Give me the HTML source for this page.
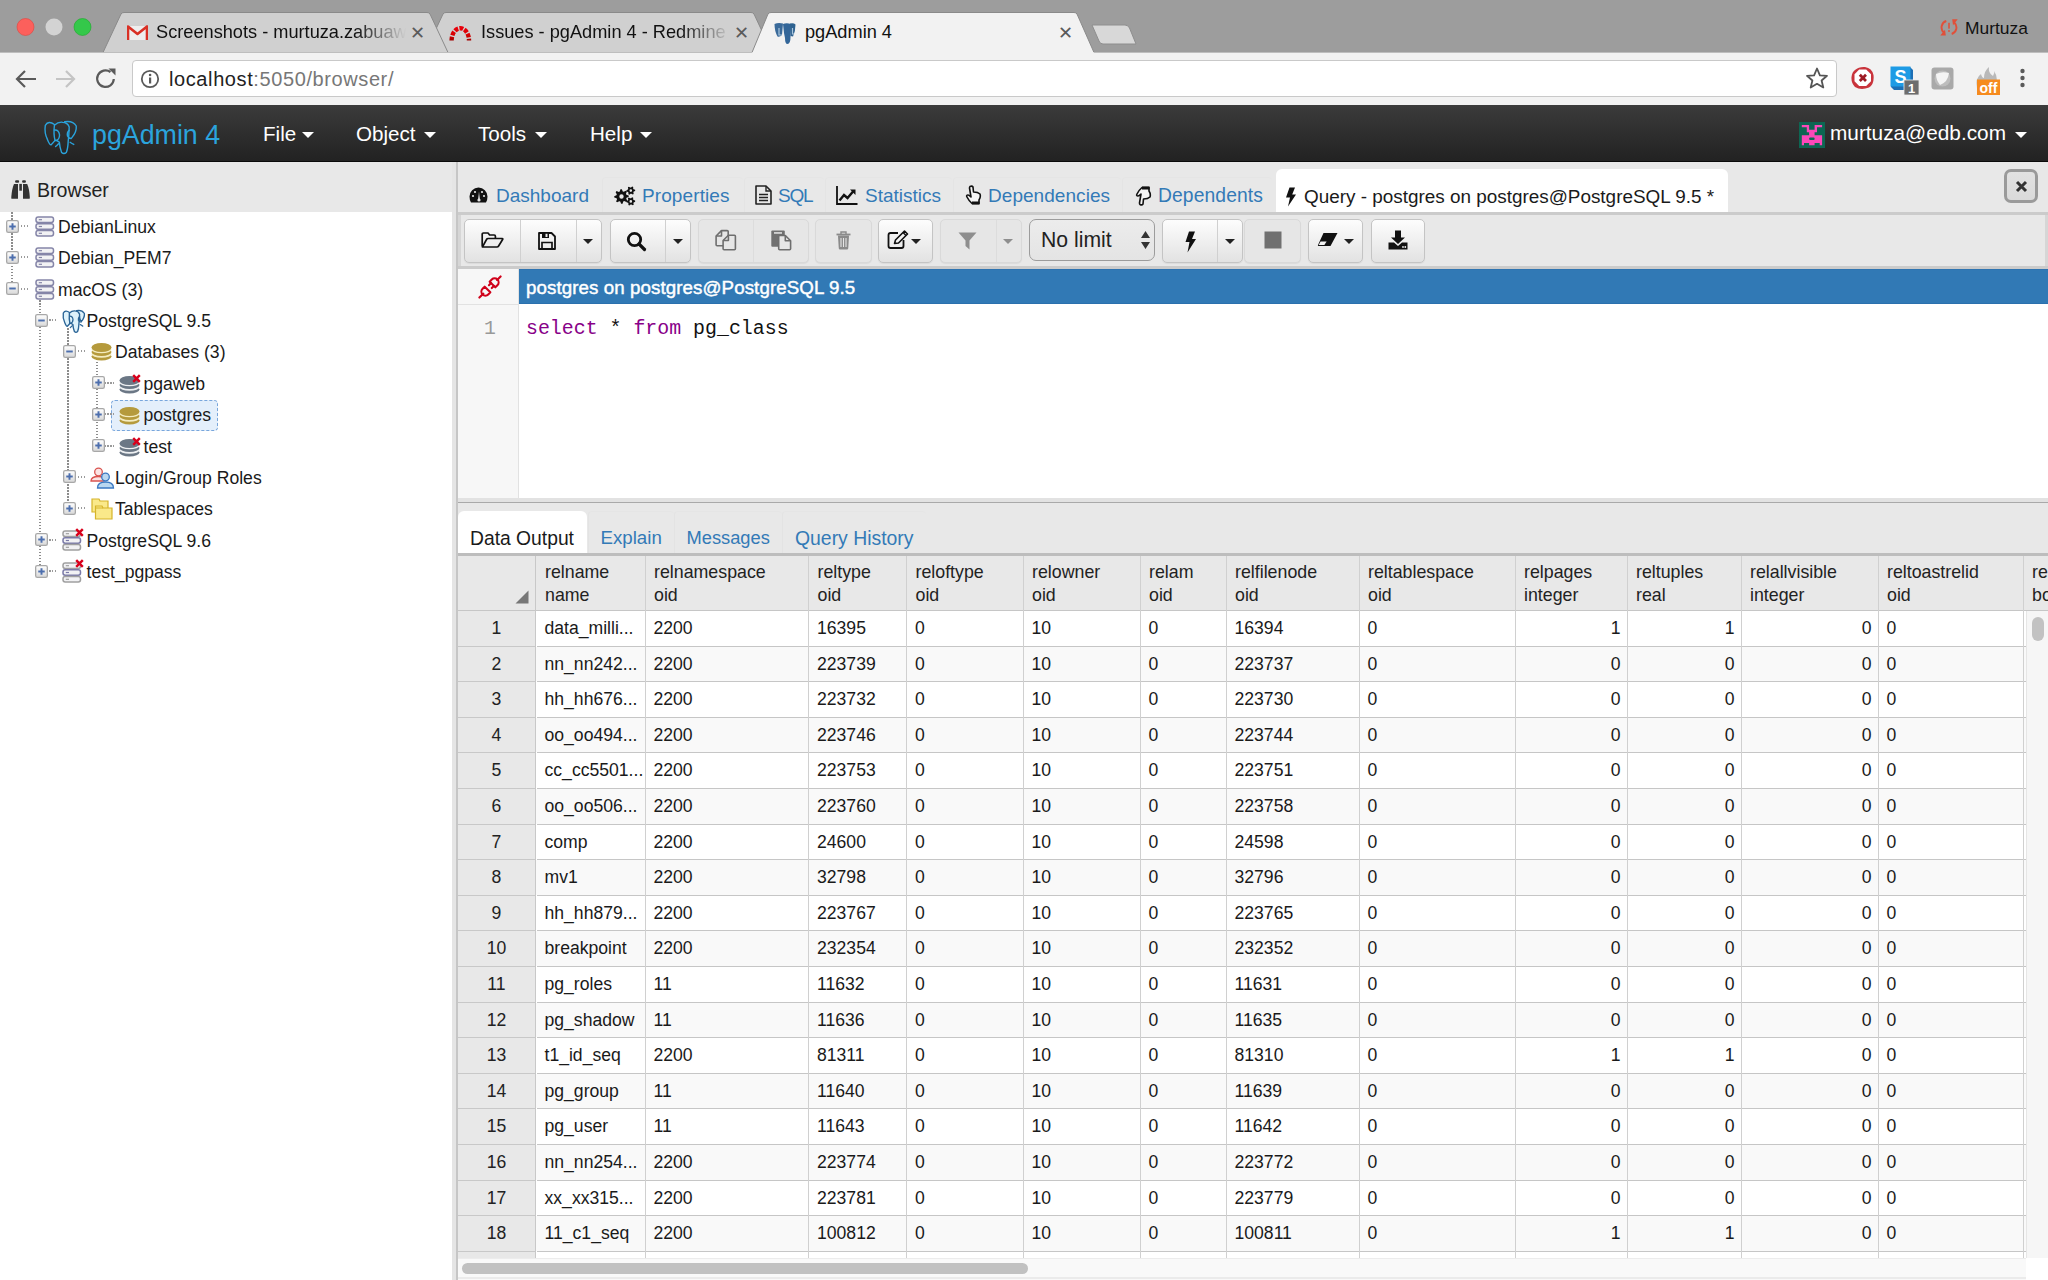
<!DOCTYPE html>
<html><head><meta charset="utf-8">
<style>
*{box-sizing:border-box;margin:0;padding:0}
html,body{width:2048px;height:1280px;overflow:hidden;background:#fff;font-family:"Liberation Sans",sans-serif;color:#222}
.a{position:absolute}
.nw{white-space:nowrap}
#titlebar{left:0;top:0;width:2048px;height:52px;background:#9d9d9d}
#toolbar{left:0;top:53px;width:2048px;height:52px;background:#f2f2f2}
#url{left:132px;top:60px;width:1705px;height:37px;background:#fff;border:1px solid #c9c9c9;border-radius:4px}
.tabt{font-size:18.2px;color:#111;top:21px;line-height:22px}
#nav{left:0;top:105px;width:2048px;height:57px;background:linear-gradient(#3b3b3b,#222);border-bottom:1px solid #0a0a0a}
.menu{font-size:20.6px;color:#fff;top:121.5px;line-height:24px}
.tab{font-size:19px;line-height:24px;color:#337ab7;top:183.5px}
.caret{width:0;height:0;border-left:6px solid transparent;border-right:6px solid transparent;border-top:6px solid #fff}
</style></head><body>
<div id="titlebar" class="a"></div>
<svg class="a" style="left:0;top:0" width="2048" height="53">
  <circle cx="25.5" cy="27" r="8.5" fill="#fc605c" stroke="#e0443e" stroke-width="0.6"/>
  <circle cx="54" cy="27" r="8.5" fill="#d3d3d3"/>
  <circle cx="82.5" cy="27" r="8.5" fill="#34c84a" stroke="#1aab29" stroke-width="0.6"/>
  <path d="M425 52.5 L443 14 Q444 12.5 446 12.5 L751 12.5 Q753 12.5 754 14 L772 52.5 Z" fill="#d0d0d0" stroke="#8a8a8a" stroke-width="1"/>
  <path d="M103 52.5 L121 14 Q122 12.5 124 12.5 L427 12.5 Q429 12.5 430 14 L448 52.5 Z" fill="#d0d0d0" stroke="#8a8a8a" stroke-width="1"/>
  <path d="M0 52.5 L752 52.5 L768 14 Q769 12.5 771 12.5 L1074 12.5 Q1076 12.5 1077 14 L1094 52.5 L2048 52.5 L2048 54 L0 54 Z" fill="#f2f2f2" stroke="#8a8a8a" stroke-width="1"/>
  <rect x="0" y="52.5" width="2048" height="2" fill="#f2f2f2"/>
  <path d="M1092 25 L1125 25 Q1128 25 1129.5 28 L1136 44 L1103 44 Q1100 44 1099 41 Z" fill="#d8d8d8" stroke="#8e8e8e" stroke-width="1"/>
</svg>
<div id="toolbar" class="a"></div>
<!-- tab contents -->
<svg class="a" style="left:127px;top:25px" width="21" height="16" viewBox="0 0 21 16">
  <rect x="1" y="1" width="19" height="14" fill="#eee"/>
  <path d="M1 15 V1.5 L10.5 9 L20 1.5 V15" fill="none" stroke="#d93025" stroke-width="2.6" stroke-linejoin="round"/>
</svg>
<div class="a tabt nw" style="left:156px;width:250px;overflow:hidden;-webkit-mask-image:linear-gradient(90deg,#000 80%,transparent 100%)">Screenshots - murtuza.zabuawala@gmail.com</div>
<div class="a" style="left:409.5px;top:21px;font-size:17.5px;color:#5a5a5a;line-height:24px">&#x2715;</div>
<svg class="a" style="left:449px;top:22.5px" width="24" height="18" viewBox="0 0 24 18">
  <defs><linearGradient id="rmg" x1="0" y1="0" x2="0" y2="1"><stop offset="0" stop-color="#e8000b"/><stop offset="0.6" stop-color="#d40000"/><stop offset="1" stop-color="#a30000"/></linearGradient></defs><path d="M2.6 17.5 A8.7 12.3 0 0 1 20 17.5" fill="none" stroke="url(#rmg)" stroke-width="4.4" stroke-dasharray="3.9 1.3"/>
</svg>
<div class="a tabt nw" style="left:481px;width:250px;overflow:hidden;-webkit-mask-image:linear-gradient(90deg,#000 80%,transparent 100%)">Issues - pgAdmin 4 - Redmine</div>
<div class="a" style="left:734px;top:21px;font-size:17.5px;color:#5a5a5a;line-height:24px">&#x2715;</div>
<svg class="a" style="left:774px;top:22px" width="22" height="23" viewBox="0 0 22 23">
  <path d="M0.5 2 Q4 0.5 9 1.5 L8 13 Q5.5 15.5 3.5 14.5 Q0.5 9 0.5 2Z" fill="#3a6a9a"/>
  <path d="M9 2 Q12.5 0.5 17 2 L16.5 15 Q16.5 22 13.5 22 Q11 22 11 16 L10 11Z" fill="#336699"/>
  <path d="M16 1.5 Q19.5 0.5 21.5 2.5 Q21.5 9 19 14.5 L16.5 14Z" fill="#2f6290"/>
  <path d="M5 6 V13 L8 13 M18.5 6 V12 L20 12" fill="none" stroke="#a9c5dd" stroke-width="1.2"/>
</svg>
<div class="a tabt nw" style="left:805px">pgAdmin 4</div>
<div class="a" style="left:1058px;top:21px;font-size:17.5px;color:#5a5a5a;line-height:24px">&#x2715;</div>
<!-- profile -->
<svg class="a" style="left:1940px;top:19px" width="18" height="17" viewBox="0 0 18 17">
  <g fill="none" stroke="#e0503a" stroke-width="1.9">
  <path d="M6.3 2 A6.8 6.8 0 0 0 3.8 13.5"/>
  <path d="M11.7 15 A6.8 6.8 0 0 0 14.2 3.5"/>
  </g>
  <path d="M0.3 16.6 L5.8 16.6 L5 10.8Z M17.7 0.3 L12.2 0.3 L13 6.2Z" fill="#e0503a"/>
  <rect x="8.2" y="3.8" width="1.6" height="5.8" fill="#e0503a"/><circle cx="9" cy="12" r="0.95" fill="#e0503a"/>
</svg>
<div class="a nw" style="left:1965px;top:16px;font-size:17.4px;color:#111;line-height:24px">Murtuza</div>

<!-- toolbar -->
<svg class="a" style="left:14px;top:66px" width="120" height="26" viewBox="0 0 120 26">
  <path d="M22 13 H4 M11 5 L3 13 L11 21" fill="none" stroke="#5a5a5a" stroke-width="2.2"/>
  <path d="M42 13 H60 M52 5 L60 13 L52 21" fill="none" stroke="#c4c4c4" stroke-width="2.2"/>
  <path d="M96.5 6 A8.3 8.3 0 1 0 99.8 13" fill="none" stroke="#5a5a5a" stroke-width="2.2"/>
  <path d="M94.5 2.5 L101.5 2.5 L101.5 9.5 Z" fill="#5a5a5a"/>
</svg>
<div id="url" class="a"></div>
<svg class="a" style="left:140px;top:69px" width="20" height="20" viewBox="0 0 20 20">
  <circle cx="10" cy="10" r="8.2" fill="none" stroke="#5a5a5a" stroke-width="1.8"/>
  <rect x="9" y="8.5" width="2.2" height="6" fill="#5a5a5a"/><circle cx="10.1" cy="6" r="1.3" fill="#5a5a5a"/>
</svg>
<div class="a nw" style="left:169px;top:66px;font-size:20px;line-height:26px;letter-spacing:0.6px;color:#222">localhost<span style="color:#777">:5050/browser/</span></div>
<svg class="a" style="left:1805px;top:67px" width="24" height="22" viewBox="0 0 24 22">
  <path d="M12 1.5 L14.9 8.3 L22 8.8 L16.6 13.5 L18.3 20.5 L12 16.8 L5.7 20.5 L7.4 13.5 L2 8.8 L9.1 8.3 Z" fill="none" stroke="#555" stroke-width="1.8" stroke-linejoin="round"/>
</svg>
<!-- extensions -->
<svg class="a" style="left:1851px;top:66px" width="24" height="24" viewBox="0 0 24 24">
  <path d="M4 4 Q8 0.5 14 1 Q21 2 22.5 9 Q23.5 18 18 21.5 Q10 24.5 4 21 Q0 17 0.5 11 Q1 6 4 4Z" fill="#c9343c"/>
  <path d="M8.2 3.5 H15.2 L20 8.3 V15.2 L15.2 20 H8.2 L3.5 15.2 V8.3Z" fill="#fff"/>
  <path d="M8.8 8.8 L15 15 M15 8.8 L8.8 15" stroke="#9e1a24" stroke-width="2.8"/>
</svg>
<svg class="a" style="left:1890px;top:66px" width="32" height="30" viewBox="0 0 32 30">
  <path d="M1 1 H20 L23 4 V22 L20 24 H4 L1 21Z" fill="#1d6fb5"/>
  <rect x="0.5" y="0.5" width="20" height="20" fill="#1e9be5"/>
  <text x="10.5" y="17" font-family="Liberation Sans" font-weight="700" font-size="18" fill="#fff" text-anchor="middle">S</text>
  <rect x="14" y="14" width="15" height="15" fill="#6d6d6d" stroke="#eee" stroke-width="0.8"/>
  <text x="21.5" y="27" font-family="Liberation Sans" font-weight="700" font-size="13" fill="#fff" text-anchor="middle">1</text>
</svg>
<svg class="a" style="left:1931px;top:67px" width="23" height="23" viewBox="0 0 23 23">
  <rect x="0.5" y="0.5" width="22" height="22" rx="3" fill="#a9a9a9"/>
  <circle cx="11.5" cy="11.5" r="8" fill="#bdbdbd"/>
  <path d="M5 7 Q11 4 18 6 Q17 15 9 18 Q5 13 5 7Z" fill="#f4f4f4"/>
</svg>
<svg class="a" style="left:1974px;top:66px" width="27" height="30" viewBox="0 0 27 30">
  <path d="M3 22 Q1 12 7 8 Q8 12 10 12 Q10 5 15 1 Q14 7 19 10 Q21 7 20 5 Q25 12 21 22Z" fill="#b9b9b9"/>
  <rect x="3" y="13.5" width="23" height="15.5" fill="#f68b1e"/>
  <text x="14.5" y="26.5" font-family="Liberation Sans" font-weight="700" font-size="14" fill="#fff" text-anchor="middle">off</text>
</svg>
<svg class="a" style="left:2018px;top:67px" width="10" height="24" viewBox="0 0 10 24">
  <circle cx="4.5" cy="4" r="2.2" fill="#5a5a5a"/><circle cx="4.5" cy="11" r="2.2" fill="#5a5a5a"/><circle cx="4.5" cy="18" r="2.2" fill="#5a5a5a"/>
</svg>

<!-- navbar -->
<div id="nav" class="a"></div>
<svg class="a" style="left:39px;top:115px" width="44" height="44" viewBox="0 0 30 30">
<g fill="none" stroke="#2aa3dc" stroke-width="0.95" stroke-linejoin="round" stroke-linecap="round">
<path d="M10.5 6.5 Q6.5 3.5 4.3 7 Q3.5 12 5.8 16.8 Q7.3 20.5 8.3 20.3 Q9.6 19 10.8 17.5"/>
<path d="M17.5 4.6 Q23 3.6 25.4 7.5 Q25.8 11.5 22.3 15.6"/>
<path d="M10.5 7 Q13 4.6 16 4.9 Q19.6 5.1 20.6 8.2 Q20.4 14 19.9 18 Q19.7 23 18.6 25.6 Q17 27 15.4 25.6 Q14.1 22 13.9 18.6 Q12.5 17.2 10.9 17.2 Q9.8 13 10.5 7"/>
<path d="M10.6 10.2 Q13.6 10 14 13.6 Q14 17 11.2 17.4"/>
<path d="M20.6 10.4 Q18.9 12 19.4 14.2 Q20.3 16 22 16"/>
<path d="M11.3 21.5 Q12.4 20.6 13.3 19.6 M21.2 18.6 Q22.5 19.5 23.7 20.1"/>
</g>
</svg>
<div class="a nw" style="left:92px;top:117px;font-size:26.8px;color:#2ba4dd;line-height:36px">pgAdmin 4</div>
<div class="a menu nw" style="left:263px">File</div><div class="a caret" style="left:302px;top:132px"></div>
<div class="a menu nw" style="left:356px">Object</div><div class="a caret" style="left:424px;top:132px"></div>
<div class="a menu nw" style="left:478px">Tools</div><div class="a caret" style="left:535px;top:132px"></div>
<div class="a menu nw" style="left:590px">Help</div><div class="a caret" style="left:640px;top:132px"></div>
<svg class="a" style="left:1799px;top:122px" width="26" height="26" viewBox="0 0 26 26">
  <rect width="26" height="26" fill="#0d6652"/>
  <path d="M2.8 2.9 H10.1 V7.7 H15.6 V2.9 H23.1 V5.3 H18 V10.3 H15.6 V13.3 H23.1 V23.3 H20.7 V21 H15.6 V23.3 H10.1 V21 H5 V23.3 H2.8 V13.3 H10.1 V10.3 H7.8 V5.3 H2.8 Z" fill="#fb48b9"/>
  <rect x="10.1" y="15.6" width="5.5" height="2.4" rx="1" fill="#0d6652"/>
</svg>
<div class="a nw" style="left:1830px;top:120px;font-size:20.8px;color:#fff;line-height:26px">murtuza@edb.com</div>
<div class="a caret" style="left:2015px;top:132px"></div>
<!-- ============ LEFT PANEL ============ -->
<div class="a" style="left:0;top:162px;width:452px;height:1118px;background:#fff"></div>
<div class="a" style="left:0;top:162px;width:452px;height:50px;background:#e8e8e8"></div>
<svg class="a" style="left:11px;top:180px" width="20" height="20" viewBox="0 0 20 20">
  <g fill="#333">
  <rect x="4.1" y="0.3" width="4" height="2.4" rx="1"/><rect x="11.1" y="0.3" width="3.8" height="2.4" rx="1"/>
  <path d="M3 3.9 H7 V18.7 H0.5 Q0.2 18.7 0.3 17 Q0.8 9 3 3.9Z"/>
  <rect x="8.3" y="3.9" width="2.6" height="6.8"/>
  <path d="M12 3.9 H16.2 Q18.4 9 18.8 17 Q18.9 18.7 18.5 18.7 H12Z"/>
  </g>
</svg>
<div class="a nw" style="left:37px;top:178px;font-size:19.6px;line-height:24px;color:#222">Browser</div>
<div class="a" style="left:452px;top:162px;width:6px;height:1118px;background:#e5e5e5;border-right:2px solid #c6c6c6"></div>
<div class="a" style="left:111px;top:400px;width:107px;height:31px;background:#e4effb;border:1.5px dashed #78a6dc;border-radius:4px"></div>
<div class="a" style="left:11px;top:212px;width:1.5px;height:77px;background:repeating-linear-gradient(180deg,#8c8c8c 0 1.5px,transparent 1.5px 3px)"></div>
<div class="a" style="left:39px;top:297px;width:1.5px;height:274px;background:repeating-linear-gradient(180deg,#8c8c8c 0 1.5px,transparent 1.5px 3px)"></div>
<div class="a" style="left:67px;top:328px;width:1.5px;height:180px;background:repeating-linear-gradient(180deg,#8c8c8c 0 1.5px,transparent 1.5px 3px)"></div>
<div class="a" style="left:96px;top:359px;width:1.5px;height:87px;background:repeating-linear-gradient(180deg,#8c8c8c 0 1.5px,transparent 1.5px 3px)"></div>
<div class="a" style="left:18px;top:225px;width:10px;height:1.5px;background:repeating-linear-gradient(90deg,#9a9a9a 0 1.5px,transparent 1.5px 3px)"></div>
<svg class="a" style="left:6.0px;top:219.5px" width="13" height="13" viewBox="0 0 12 12"><defs><linearGradient id="eg" x1="0" y1="0" x2="0" y2="1"><stop offset="0" stop-color="#fff"/><stop offset="1" stop-color="#d8d8d8"/></linearGradient></defs><rect x="0.6" y="0.6" width="10.8" height="10.8" rx="1.5" fill="url(#eg)" stroke="#a8a8a8" stroke-width="1.2"/><path d="M3 6 H9" stroke="#4d6fae" stroke-width="1.8"/><path d="M6 3 V9" stroke="#4d6fae" stroke-width="1.8"/></svg>
<svg class="a" style="left:35.0px;top:216.0px" width="20" height="21" viewBox="0 0 20 21"><rect x="1" y="1" width="17.5" height="5.4" rx="2.2" fill="#f2f2f4" stroke="#8585a8" stroke-width="1.5"/><path d="M3.8 3.7 H7" stroke="#8585a8" stroke-width="1.2"/><rect x="1" y="7.8" width="17.5" height="5.4" rx="2.2" fill="#f2f2f4" stroke="#8585a8" stroke-width="1.5"/><path d="M3.8 10.5 H7" stroke="#8585a8" stroke-width="1.2"/><rect x="1" y="14.6" width="17.5" height="5.4" rx="2.2" fill="#f2f2f4" stroke="#8585a8" stroke-width="1.5"/><path d="M3.8 17.3 H7" stroke="#8585a8" stroke-width="1.2"/></svg>
<div class="a nw" style="left:58.0px;top:215.0px;font-size:17.6px;line-height:24px;color:#1a1a1a">DebianLinux</div>
<div class="a" style="left:18px;top:256px;width:10px;height:1.5px;background:repeating-linear-gradient(90deg,#9a9a9a 0 1.5px,transparent 1.5px 3px)"></div>
<svg class="a" style="left:6.0px;top:250.9px" width="13" height="13" viewBox="0 0 12 12"><defs><linearGradient id="eg" x1="0" y1="0" x2="0" y2="1"><stop offset="0" stop-color="#fff"/><stop offset="1" stop-color="#d8d8d8"/></linearGradient></defs><rect x="0.6" y="0.6" width="10.8" height="10.8" rx="1.5" fill="url(#eg)" stroke="#a8a8a8" stroke-width="1.2"/><path d="M3 6 H9" stroke="#4d6fae" stroke-width="1.8"/><path d="M6 3 V9" stroke="#4d6fae" stroke-width="1.8"/></svg>
<svg class="a" style="left:35.0px;top:247.4px" width="20" height="21" viewBox="0 0 20 21"><rect x="1" y="1" width="17.5" height="5.4" rx="2.2" fill="#f2f2f4" stroke="#8585a8" stroke-width="1.5"/><path d="M3.8 3.7 H7" stroke="#8585a8" stroke-width="1.2"/><rect x="1" y="7.8" width="17.5" height="5.4" rx="2.2" fill="#f2f2f4" stroke="#8585a8" stroke-width="1.5"/><path d="M3.8 10.5 H7" stroke="#8585a8" stroke-width="1.2"/><rect x="1" y="14.6" width="17.5" height="5.4" rx="2.2" fill="#f2f2f4" stroke="#8585a8" stroke-width="1.5"/><path d="M3.8 17.3 H7" stroke="#8585a8" stroke-width="1.2"/></svg>
<div class="a nw" style="left:58.0px;top:246.4px;font-size:17.6px;line-height:24px;color:#1a1a1a">Debian_PEM7</div>
<div class="a" style="left:18px;top:288px;width:10px;height:1.5px;background:repeating-linear-gradient(90deg,#9a9a9a 0 1.5px,transparent 1.5px 3px)"></div>
<svg class="a" style="left:6.0px;top:282.2px" width="13" height="13" viewBox="0 0 12 12"><defs><linearGradient id="eg" x1="0" y1="0" x2="0" y2="1"><stop offset="0" stop-color="#fff"/><stop offset="1" stop-color="#d8d8d8"/></linearGradient></defs><rect x="0.6" y="0.6" width="10.8" height="10.8" rx="1.5" fill="url(#eg)" stroke="#a8a8a8" stroke-width="1.2"/><path d="M3 6 H9" stroke="#4d6fae" stroke-width="1.8"/></svg>
<svg class="a" style="left:35.0px;top:278.7px" width="20" height="21" viewBox="0 0 20 21"><rect x="1" y="1" width="17.5" height="5.4" rx="2.2" fill="#f2f2f4" stroke="#8585a8" stroke-width="1.5"/><path d="M3.8 3.7 H7" stroke="#8585a8" stroke-width="1.2"/><rect x="1" y="7.8" width="17.5" height="5.4" rx="2.2" fill="#f2f2f4" stroke="#8585a8" stroke-width="1.5"/><path d="M3.8 10.5 H7" stroke="#8585a8" stroke-width="1.2"/><rect x="1" y="14.6" width="17.5" height="5.4" rx="2.2" fill="#f2f2f4" stroke="#8585a8" stroke-width="1.5"/><path d="M3.8 17.3 H7" stroke="#8585a8" stroke-width="1.2"/></svg>
<div class="a nw" style="left:58.0px;top:277.7px;font-size:17.6px;line-height:24px;color:#1a1a1a">macOS (3)</div>
<div class="a" style="left:46px;top:319px;width:10px;height:1.5px;background:repeating-linear-gradient(90deg,#9a9a9a 0 1.5px,transparent 1.5px 3px)"></div>
<svg class="a" style="left:34.5px;top:313.6px" width="13" height="13" viewBox="0 0 12 12"><defs><linearGradient id="eg" x1="0" y1="0" x2="0" y2="1"><stop offset="0" stop-color="#fff"/><stop offset="1" stop-color="#d8d8d8"/></linearGradient></defs><rect x="0.6" y="0.6" width="10.8" height="10.8" rx="1.5" fill="url(#eg)" stroke="#a8a8a8" stroke-width="1.2"/><path d="M3 6 H9" stroke="#4d6fae" stroke-width="1.8"/></svg>
<svg class="a" style="left:59.0px;top:306.1px" width="30" height="30" viewBox="0 0 30 30">
<g fill="#def2fb" stroke="#2a6496" stroke-width="1.35" stroke-linejoin="round" stroke-linecap="round">
<path d="M10.5 6.5 Q6.5 3.5 4.3 7 Q3.5 12 5.8 16.8 Q7.3 20.5 8.3 20.3 Q9.6 19 10.8 17.5 Z"/>
<path d="M17.5 4.6 Q23 3.6 25.4 7.5 Q25.8 11.5 22.3 15.6 Q20.8 14 20.3 10 Z"/>
<path d="M10.5 7 Q13 4.6 16 4.9 Q19.6 5.1 20.6 8.2 Q20.4 14 19.9 18 Q19.7 23 18.6 25.6 Q17 27 15.4 25.6 Q14.1 22 13.9 18.6 Q12.5 17.2 10.9 17.2 Q9.8 13 10.5 7Z"/>
</g>
<g fill="none" stroke="#2a6496" stroke-width="1.25" stroke-linecap="round">
<path d="M10.6 10.2 Q13.6 10 14 13.6 Q14 17 11.2 17.4"/>
<path d="M20.6 10.4 Q18.9 12 19.4 14.2 Q20.3 16 22 16"/>
<path d="M11.3 21.5 Q12.4 20.6 13.3 19.6 M21.2 18.6 Q22.5 19.5 23.7 20.1"/>
</g>
</svg>
<div class="a nw" style="left:86.5px;top:309.1px;font-size:17.6px;line-height:24px;color:#1a1a1a">PostgreSQL 9.5</div>
<div class="a" style="left:75px;top:350px;width:10px;height:1.5px;background:repeating-linear-gradient(90deg,#9a9a9a 0 1.5px,transparent 1.5px 3px)"></div>
<svg class="a" style="left:63.0px;top:344.9px" width="13" height="13" viewBox="0 0 12 12"><defs><linearGradient id="eg" x1="0" y1="0" x2="0" y2="1"><stop offset="0" stop-color="#fff"/><stop offset="1" stop-color="#d8d8d8"/></linearGradient></defs><rect x="0.6" y="0.6" width="10.8" height="10.8" rx="1.5" fill="url(#eg)" stroke="#a8a8a8" stroke-width="1.2"/><path d="M3 6 H9" stroke="#4d6fae" stroke-width="1.8"/></svg>
<svg class="a" style="left:91.0px;top:342.4px" width="21" height="19" viewBox="0 0 21 19"><ellipse cx="10.5" cy="14.5" rx="10" ry="4" fill="#b59a3c"/><ellipse cx="10.5" cy="12.3" rx="10" ry="3.4" fill="#f4ecc0"/><ellipse cx="10.5" cy="10" rx="10" ry="4" fill="#b59a3c"/><ellipse cx="10.5" cy="7.8" rx="10" ry="3.4" fill="#f4ecc0"/><ellipse cx="10.5" cy="5.5" rx="10" ry="4.5" fill="#b59a3c"/></svg>
<div class="a nw" style="left:115.0px;top:340.4px;font-size:17.6px;line-height:24px;color:#1a1a1a">Databases (3)</div>
<div class="a" style="left:104px;top:382px;width:10px;height:1.5px;background:repeating-linear-gradient(90deg,#9a9a9a 0 1.5px,transparent 1.5px 3px)"></div>
<svg class="a" style="left:91.5px;top:376.3px" width="13" height="13" viewBox="0 0 12 12"><defs><linearGradient id="eg" x1="0" y1="0" x2="0" y2="1"><stop offset="0" stop-color="#fff"/><stop offset="1" stop-color="#d8d8d8"/></linearGradient></defs><rect x="0.6" y="0.6" width="10.8" height="10.8" rx="1.5" fill="url(#eg)" stroke="#a8a8a8" stroke-width="1.2"/><path d="M3 6 H9" stroke="#4d6fae" stroke-width="1.8"/><path d="M6 3 V9" stroke="#4d6fae" stroke-width="1.8"/></svg>
<svg class="a" style="left:118.5px;top:374.8px" width="21" height="19" viewBox="0 0 21 19"><ellipse cx="10.5" cy="14.5" rx="10" ry="4" fill="#6b7785"/><ellipse cx="10.5" cy="12.3" rx="10" ry="3.4" fill="#eef0f2"/><ellipse cx="10.5" cy="10" rx="10" ry="4" fill="#6b7785"/><ellipse cx="10.5" cy="7.8" rx="10" ry="3.4" fill="#eef0f2"/><ellipse cx="10.5" cy="5.5" rx="10" ry="4.5" fill="#6b7785"/></svg><svg class="a" style="left:132.0px;top:373.8px" width="9" height="9" viewBox="0 0 9 9"><path d="M1.2 1.2 L7.8 7.8 M7.8 1.2 L1.2 7.8" stroke="#d9001b" stroke-width="2.4"/></svg>
<div class="a nw" style="left:143.5px;top:371.8px;font-size:17.6px;line-height:24px;color:#1a1a1a">pgaweb</div>
<div class="a" style="left:104px;top:413px;width:10px;height:1.5px;background:repeating-linear-gradient(90deg,#9a9a9a 0 1.5px,transparent 1.5px 3px)"></div>
<svg class="a" style="left:91.5px;top:407.7px" width="13" height="13" viewBox="0 0 12 12"><defs><linearGradient id="eg" x1="0" y1="0" x2="0" y2="1"><stop offset="0" stop-color="#fff"/><stop offset="1" stop-color="#d8d8d8"/></linearGradient></defs><rect x="0.6" y="0.6" width="10.8" height="10.8" rx="1.5" fill="url(#eg)" stroke="#a8a8a8" stroke-width="1.2"/><path d="M3 6 H9" stroke="#4d6fae" stroke-width="1.8"/><path d="M6 3 V9" stroke="#4d6fae" stroke-width="1.8"/></svg>
<svg class="a" style="left:118.5px;top:405.7px" width="21" height="19" viewBox="0 0 21 19"><ellipse cx="10.5" cy="14.5" rx="10" ry="4" fill="#b59a3c"/><ellipse cx="10.5" cy="12.3" rx="10" ry="3.4" fill="#f4ecc0"/><ellipse cx="10.5" cy="10" rx="10" ry="4" fill="#b59a3c"/><ellipse cx="10.5" cy="7.8" rx="10" ry="3.4" fill="#f4ecc0"/><ellipse cx="10.5" cy="5.5" rx="10" ry="4.5" fill="#b59a3c"/></svg>
<div class="a nw" style="left:143.5px;top:403.2px;font-size:17.6px;line-height:24px;color:#1a1a1a">postgres</div>
<div class="a" style="left:104px;top:445px;width:10px;height:1.5px;background:repeating-linear-gradient(90deg,#9a9a9a 0 1.5px,transparent 1.5px 3px)"></div>
<svg class="a" style="left:91.5px;top:439.0px" width="13" height="13" viewBox="0 0 12 12"><defs><linearGradient id="eg" x1="0" y1="0" x2="0" y2="1"><stop offset="0" stop-color="#fff"/><stop offset="1" stop-color="#d8d8d8"/></linearGradient></defs><rect x="0.6" y="0.6" width="10.8" height="10.8" rx="1.5" fill="url(#eg)" stroke="#a8a8a8" stroke-width="1.2"/><path d="M3 6 H9" stroke="#4d6fae" stroke-width="1.8"/><path d="M6 3 V9" stroke="#4d6fae" stroke-width="1.8"/></svg>
<svg class="a" style="left:118.5px;top:437.5px" width="21" height="19" viewBox="0 0 21 19"><ellipse cx="10.5" cy="14.5" rx="10" ry="4" fill="#6b7785"/><ellipse cx="10.5" cy="12.3" rx="10" ry="3.4" fill="#eef0f2"/><ellipse cx="10.5" cy="10" rx="10" ry="4" fill="#6b7785"/><ellipse cx="10.5" cy="7.8" rx="10" ry="3.4" fill="#eef0f2"/><ellipse cx="10.5" cy="5.5" rx="10" ry="4.5" fill="#6b7785"/></svg><svg class="a" style="left:132.0px;top:436.5px" width="9" height="9" viewBox="0 0 9 9"><path d="M1.2 1.2 L7.8 7.8 M7.8 1.2 L1.2 7.8" stroke="#d9001b" stroke-width="2.4"/></svg>
<div class="a nw" style="left:143.5px;top:434.5px;font-size:17.6px;line-height:24px;color:#1a1a1a">test</div>
<div class="a" style="left:75px;top:476px;width:10px;height:1.5px;background:repeating-linear-gradient(90deg,#9a9a9a 0 1.5px,transparent 1.5px 3px)"></div>
<svg class="a" style="left:63.0px;top:470.4px" width="13" height="13" viewBox="0 0 12 12"><defs><linearGradient id="eg" x1="0" y1="0" x2="0" y2="1"><stop offset="0" stop-color="#fff"/><stop offset="1" stop-color="#d8d8d8"/></linearGradient></defs><rect x="0.6" y="0.6" width="10.8" height="10.8" rx="1.5" fill="url(#eg)" stroke="#a8a8a8" stroke-width="1.2"/><path d="M3 6 H9" stroke="#4d6fae" stroke-width="1.8"/><path d="M6 3 V9" stroke="#4d6fae" stroke-width="1.8"/></svg>
<svg class="a" style="left:90.0px;top:466.9px" width="25" height="22" viewBox="0 0 25 22">
<circle cx="8.5" cy="5" r="3.8" fill="#fbe4e4" stroke="#d9534f" stroke-width="1.3"/>
<path d="M1 14 Q1 9.5 8.5 9.5 Q14 9.5 15 12 L14 14Z" fill="#fbe4e4" stroke="#d9534f" stroke-width="1.3"/>
<circle cx="15.5" cy="10" r="3.8" fill="#b9d7f0" stroke="#3a78c2" stroke-width="1.3"/>
<path d="M7.5 21 Q7.5 15 15.5 15 Q23.5 15 23.5 21Z" fill="#b9d7f0" stroke="#3a78c2" stroke-width="1.3"/>
</svg>
<div class="a nw" style="left:115.0px;top:465.9px;font-size:17.6px;line-height:24px;color:#1a1a1a">Login/Group Roles</div>
<div class="a" style="left:75px;top:507px;width:10px;height:1.5px;background:repeating-linear-gradient(90deg,#9a9a9a 0 1.5px,transparent 1.5px 3px)"></div>
<svg class="a" style="left:63.0px;top:501.7px" width="13" height="13" viewBox="0 0 12 12"><defs><linearGradient id="eg" x1="0" y1="0" x2="0" y2="1"><stop offset="0" stop-color="#fff"/><stop offset="1" stop-color="#d8d8d8"/></linearGradient></defs><rect x="0.6" y="0.6" width="10.8" height="10.8" rx="1.5" fill="url(#eg)" stroke="#a8a8a8" stroke-width="1.2"/><path d="M3 6 H9" stroke="#4d6fae" stroke-width="1.8"/><path d="M6 3 V9" stroke="#4d6fae" stroke-width="1.8"/></svg>
<svg class="a" style="left:91.0px;top:498.2px" width="22" height="22" viewBox="0 0 22 22">
<path d="M1 1 H8 L9 3 H17 V14 H1Z" fill="#fae98a" stroke="#d6b42a" stroke-width="1.2"/>
<path d="M4.5 8 H11 L12 10 H21 V21 H4.5Z" fill="#fae98a" stroke="#d6b42a" stroke-width="1.2"/>
<path d="M4.5 10 H12" stroke="#d6b42a" stroke-width="1"/>
</svg>
<div class="a nw" style="left:115.0px;top:497.2px;font-size:17.6px;line-height:24px;color:#1a1a1a">Tablespaces</div>
<div class="a" style="left:46px;top:539px;width:10px;height:1.5px;background:repeating-linear-gradient(90deg,#9a9a9a 0 1.5px,transparent 1.5px 3px)"></div>
<svg class="a" style="left:34.5px;top:533.1px" width="13" height="13" viewBox="0 0 12 12"><defs><linearGradient id="eg" x1="0" y1="0" x2="0" y2="1"><stop offset="0" stop-color="#fff"/><stop offset="1" stop-color="#d8d8d8"/></linearGradient></defs><rect x="0.6" y="0.6" width="10.8" height="10.8" rx="1.5" fill="url(#eg)" stroke="#a8a8a8" stroke-width="1.2"/><path d="M3 6 H9" stroke="#4d6fae" stroke-width="1.8"/><path d="M6 3 V9" stroke="#4d6fae" stroke-width="1.8"/></svg>
<svg class="a" style="left:61.5px;top:530.1px" width="20" height="21" viewBox="0 0 20 21"><rect x="1" y="1" width="17.5" height="5.4" rx="2.2" fill="#f2f2f4" stroke="#a0a0a0" stroke-width="1.5"/><path d="M3.8 3.7 H7" stroke="#a0a0a0" stroke-width="1.2"/><rect x="1" y="7.8" width="17.5" height="5.4" rx="2.2" fill="#f2f2f4" stroke="#7a7aa8" stroke-width="1.5"/><path d="M3.8 10.5 H7" stroke="#7a7aa8" stroke-width="1.2"/><rect x="1" y="14.6" width="17.5" height="5.4" rx="2.2" fill="#f2f2f4" stroke="#a0a0a0" stroke-width="1.5"/><path d="M3.8 17.3 H7" stroke="#a0a0a0" stroke-width="1.2"/></svg><svg class="a" style="left:75.0px;top:527.6px" width="9" height="9" viewBox="0 0 9 9"><path d="M1.2 1.2 L7.8 7.8 M7.8 1.2 L1.2 7.8" stroke="#d9001b" stroke-width="2.4"/></svg>
<div class="a nw" style="left:86.5px;top:528.6px;font-size:17.6px;line-height:24px;color:#1a1a1a">PostgreSQL 9.6</div>
<div class="a" style="left:46px;top:570px;width:10px;height:1.5px;background:repeating-linear-gradient(90deg,#9a9a9a 0 1.5px,transparent 1.5px 3px)"></div>
<svg class="a" style="left:34.5px;top:564.5px" width="13" height="13" viewBox="0 0 12 12"><defs><linearGradient id="eg" x1="0" y1="0" x2="0" y2="1"><stop offset="0" stop-color="#fff"/><stop offset="1" stop-color="#d8d8d8"/></linearGradient></defs><rect x="0.6" y="0.6" width="10.8" height="10.8" rx="1.5" fill="url(#eg)" stroke="#a8a8a8" stroke-width="1.2"/><path d="M3 6 H9" stroke="#4d6fae" stroke-width="1.8"/><path d="M6 3 V9" stroke="#4d6fae" stroke-width="1.8"/></svg>
<svg class="a" style="left:61.5px;top:561.5px" width="20" height="21" viewBox="0 0 20 21"><rect x="1" y="1" width="17.5" height="5.4" rx="2.2" fill="#f2f2f4" stroke="#a0a0a0" stroke-width="1.5"/><path d="M3.8 3.7 H7" stroke="#a0a0a0" stroke-width="1.2"/><rect x="1" y="7.8" width="17.5" height="5.4" rx="2.2" fill="#f2f2f4" stroke="#7a7aa8" stroke-width="1.5"/><path d="M3.8 10.5 H7" stroke="#7a7aa8" stroke-width="1.2"/><rect x="1" y="14.6" width="17.5" height="5.4" rx="2.2" fill="#f2f2f4" stroke="#a0a0a0" stroke-width="1.5"/><path d="M3.8 17.3 H7" stroke="#a0a0a0" stroke-width="1.2"/></svg><svg class="a" style="left:75.0px;top:559.0px" width="9" height="9" viewBox="0 0 9 9"><path d="M1.2 1.2 L7.8 7.8 M7.8 1.2 L1.2 7.8" stroke="#d9001b" stroke-width="2.4"/></svg>
<div class="a nw" style="left:86.5px;top:560.0px;font-size:17.6px;line-height:24px;color:#1a1a1a">test_pgpass</div><!-- ============ RIGHT PANEL ============ -->
<div class="a" style="left:458px;top:162px;width:1590px;height:1118px;background:#e8e8e8"></div>
<!-- subtle tab boxes -->

<div class="a" style="left:602px;top:177px;width:141px;height:35px;border-left:1px solid #e4e4e4;border-top:1px solid #e5e5e5;border-radius:4px 4px 0 0"></div>
<div class="a" style="left:744px;top:177px;width:80px;height:35px;border-left:1px solid #e4e4e4;border-top:1px solid #e5e5e5;border-radius:4px 4px 0 0"></div>
<div class="a" style="left:825px;top:177px;width:127px;height:35px;border-left:1px solid #e4e4e4;border-top:1px solid #e5e5e5;border-radius:4px 4px 0 0"></div>
<div class="a" style="left:953px;top:177px;width:168px;height:35px;border-left:1px solid #e4e4e4;border-top:1px solid #e5e5e5;border-radius:4px 4px 0 0"></div>
<div class="a" style="left:1122px;top:177px;width:150px;height:35px;border-left:1px solid #e4e4e4;border-top:1px solid #e5e5e5;border-radius:4px 4px 0 0"></div>
<!-- tab icons + labels -->
<svg class="a" style="left:469px;top:187px" width="19" height="16" viewBox="0 0 19 16">
  <path d="M9.5 0.5 A9 9 0 0 0 0.5 9.5 Q0.5 13 2 15.5 H17 Q18.5 13 18.5 9.5 A9 9 0 0 0 9.5 0.5Z" fill="#111"/>
  <circle cx="4" cy="9" r="1.1" fill="#e8e8e8"/><circle cx="6" cy="5" r="1.1" fill="#e8e8e8"/><circle cx="13" cy="5" r="1.1" fill="#e8e8e8"/><circle cx="15" cy="9" r="1.1" fill="#e8e8e8"/>
  <path d="M9 13.5 L10 4.5 L11 13.5Z" fill="#e8e8e8"/><circle cx="10" cy="13" r="1.6" fill="#e8e8e8"/>
</svg>
<div class="a nw tab" style="left:496px">Dashboard</div>
<svg class="a" style="left:614px;top:186px" width="22" height="20" viewBox="0 0 22 20"><path d="M14.72,9.43 L14.79,10.86 L12.54,11.76 L12.20,12.72 L13.36,14.85 L12.40,15.91 L10.17,14.96 L9.25,15.40 L8.57,17.72 L7.14,17.79 L6.24,15.54 L5.28,15.20 L3.15,16.36 L2.09,15.40 L3.04,13.17 L2.60,12.25 L0.28,11.57 L0.21,10.14 L2.46,9.24 L2.80,8.28 L1.64,6.15 L2.60,5.09 L4.83,6.04 L5.75,5.60 L6.43,3.28 L7.86,3.21 L8.76,5.46 L9.72,5.80 L11.85,4.64 L12.91,5.60 L11.96,7.83 L12.40,8.75Z M9.7,10.5 A2.2 2.2 0 1 0 5.3,10.5 A2.2 2.2 0 1 0 9.7,10.5Z" fill="#111" fill-rule="evenodd"/><path d="M21.12,3.74 L21.19,4.89 L19.74,5.60 L19.38,6.32 L19.70,7.91 L18.75,8.55 L17.40,7.64 L16.60,7.69 L15.39,8.77 L14.36,8.26 L14.47,6.64 L14.02,5.97 L12.48,5.46 L12.41,4.31 L13.86,3.60 L14.22,2.88 L13.90,1.29 L14.85,0.65 L16.20,1.56 L17.00,1.51 L18.21,0.43 L19.24,0.94 L19.13,2.56 L19.58,3.23Z M18.1,4.6 A1.3 1.3 0 1 0 15.5,4.6 A1.3 1.3 0 1 0 18.1,4.6Z" fill="#111" fill-rule="evenodd"/><path d="M21.12,14.54 L21.19,15.69 L19.74,16.40 L19.38,17.12 L19.70,18.71 L18.75,19.35 L17.40,18.44 L16.60,18.49 L15.39,19.57 L14.36,19.06 L14.47,17.44 L14.02,16.77 L12.48,16.26 L12.41,15.11 L13.86,14.40 L14.22,13.68 L13.90,12.09 L14.85,11.45 L16.20,12.36 L17.00,12.31 L18.21,11.23 L19.24,11.74 L19.13,13.36 L19.58,14.03Z M18.1,15.4 A1.3 1.3 0 1 0 15.5,15.4 A1.3 1.3 0 1 0 18.1,15.4Z" fill="#111" fill-rule="evenodd"/></svg>
<div class="a nw tab" style="left:642px;letter-spacing:0.1px">Properties</div>
<svg class="a" style="left:755px;top:185px" width="17" height="20" viewBox="0 0 17 20">
  <path d="M1 1 H11 L16 6 V19 H1Z" fill="none" stroke="#222" stroke-width="1.6" stroke-linejoin="round"/>
  <path d="M11 1 V6 H16" fill="none" stroke="#222" stroke-width="1.4"/>
  <path d="M4 9.5 H13 M4 12.5 H13 M4 15.5 H13" stroke="#222" stroke-width="1.3"/>
</svg>
<div class="a nw tab" style="left:778px;letter-spacing:-1.2px">SQL</div>
<svg class="a" style="left:836px;top:186px" width="22" height="19" viewBox="0 0 22 19">
  <path d="M1 0 V18 H21.5" fill="none" stroke="#111" stroke-width="1.8"/>
  <path d="M3.5 14.5 L8 9 L11.5 12 L17.5 5" fill="none" stroke="#111" stroke-width="2.4"/>
  <path d="M14 3.5 H19.5 V9Z" fill="#111"/>
</svg>
<div class="a nw tab" style="left:865px">Statistics</div>
<svg class="a" style="left:964px;top:185px" width="18" height="20" viewBox="0 0 18 20">
  <path d="M6 1.5 Q8 0.5 9 2 L9.5 7 Q14 7 16 9 Q17 12 15 15 V18.5 H8 Q5 16 3 12 Q2 10 4 10 Q5 10 7 12 L5.5 3 Q5.5 2 6 1.5Z" fill="#f5f5f5" stroke="#111" stroke-width="1.6" stroke-linejoin="round"/>
  <rect x="8" y="16.5" width="7.5" height="3" fill="#111"/>
</svg>
<div class="a nw tab" style="left:988px;letter-spacing:0.05px">Dependencies</div>
<svg class="a" style="left:1134px;top:185.5px" width="18" height="20" viewBox="0 0 18 20">
  <g transform="translate(0 20) scale(1 -1)">
  <path d="M6 1.5 Q8 0.5 9 2 L9.5 7 Q14 7 16 9 Q17 12 15 15 V18.5 H8 Q5 16 3 12 Q2 10 4 10 Q5 10 7 12 L5.5 3 Q5.5 2 6 1.5Z" fill="#f5f5f5" stroke="#111" stroke-width="1.6" stroke-linejoin="round"/>
  <rect x="8" y="16.5" width="7.5" height="3" fill="#111"/>
  </g>
</svg>
<div class="a nw tab" style="left:1158px;letter-spacing:0.1px;font-size:19.3px">Dependents</div>
<!-- active query tab -->
<div class="a" style="left:1276px;top:169px;width:452px;height:44px;background:#fff;border-radius:6px 6px 0 0"></div>
<svg class="a" style="left:1285px;top:187px" width="12" height="20" viewBox="0 0 12 20">
  <path d="M4.5 0.5 H10 L7.2 7.5 L11 7.5 L3 19.5 L5 10.5 L1 10.5Z" fill="#111"/>
</svg>
<div class="a nw tab" style="left:1304px;color:#1a1a1a;font-size:18.9px;top:185px">Query - postgres on postgres@PostgreSQL 9.5 *</div>
<!-- close btn -->
<div class="a" style="left:2004px;top:169px;width:34px;height:34px;border:3px solid #9a9a9a;border-radius:7px;background:linear-gradient(#e2e2e2,#dadada)"></div>
<svg class="a" style="left:2015px;top:180px" width="13" height="13" viewBox="0 0 13 13"><path d="M2 2 L11 11 M11 2 L2 11" stroke="#333" stroke-width="3"/></svg>
<!-- tab strip bottom border -->
<div class="a" style="left:458px;top:212px;width:1590px;height:3px;background:#cbcbcb"></div>
<!-- toolbar -->
<div class="a" style="left:458px;top:215px;width:3px;height:51px;background:#d6d6d6"></div>
<div class="a" style="left:2045px;top:215px;width:3px;height:51px;background:#d6d6d6"></div>
<div class="a" style="left:458px;top:265.5px;width:1590px;height:3.5px;background:#cbcbcb"></div>
<div class="a" style="left:464px;top:218.5px;width:138px;height:44px;background:linear-gradient(#fdfdfd,#e2e2e2);border:1px solid #c4c4c4;border-radius:5px;box-shadow:0 1px 1px rgba(0,0,0,0.06)"></div>
<div class="a" style="left:519.5px;top:219.5px;width:1px;height:42px;background:#d0d0d0"></div>
<div class="a" style="left:575.5px;top:219.5px;width:1px;height:42px;background:#d0d0d0"></div>
<div class="a" style="left:610px;top:218.5px;width:81px;height:44px;background:linear-gradient(#fdfdfd,#e2e2e2);border:1px solid #c4c4c4;border-radius:5px;box-shadow:0 1px 1px rgba(0,0,0,0.06)"></div>
<div class="a" style="left:664.5px;top:219.5px;width:1px;height:42px;background:#d0d0d0"></div>
<div class="a" style="left:698px;top:218.5px;width:111px;height:44px;background:#e6e6e6;border:1px solid #d9d9d9;border-radius:5px;box-shadow:0 1px 1px rgba(0,0,0,0.06)"></div>
<div class="a" style="left:753px;top:219.5px;width:1px;height:42px;background:#dcdcdc"></div>
<div class="a" style="left:815px;top:218.5px;width:57px;height:44px;background:#e6e6e6;border:1px solid #d9d9d9;border-radius:5px;box-shadow:0 1px 1px rgba(0,0,0,0.06)"></div>
<div class="a" style="left:878px;top:218.5px;width:55px;height:44px;background:linear-gradient(#fdfdfd,#e2e2e2);border:1px solid #c4c4c4;border-radius:5px;box-shadow:0 1px 1px rgba(0,0,0,0.06)"></div>
<div class="a" style="left:940px;top:218.5px;width:82px;height:44px;background:#e6e6e6;border:1px solid #d9d9d9;border-radius:5px;box-shadow:0 1px 1px rgba(0,0,0,0.06)"></div>
<div class="a" style="left:995.5px;top:219.5px;width:1px;height:42px;background:#dcdcdc"></div>
<div class="a" style="left:1162px;top:218.5px;width:81px;height:44px;background:linear-gradient(#fdfdfd,#e2e2e2);border:1px solid #c4c4c4;border-radius:5px;box-shadow:0 1px 1px rgba(0,0,0,0.06)"></div>
<div class="a" style="left:1217px;top:219.5px;width:1px;height:42px;background:#d0d0d0"></div>
<div class="a" style="left:1244px;top:218.5px;width:57px;height:44px;background:#e6e6e6;border:1px solid #d9d9d9;border-radius:5px;box-shadow:0 1px 1px rgba(0,0,0,0.06)"></div>
<div class="a" style="left:1308px;top:218.5px;width:55px;height:44px;background:linear-gradient(#fdfdfd,#e2e2e2);border:1px solid #c4c4c4;border-radius:5px;box-shadow:0 1px 1px rgba(0,0,0,0.06)"></div>
<div class="a" style="left:1371px;top:218.5px;width:54px;height:44px;background:linear-gradient(#fdfdfd,#e2e2e2);border:1px solid #c4c4c4;border-radius:5px;box-shadow:0 1px 1px rgba(0,0,0,0.06)"></div>
<div class="a" style="left:1029px;top:219px;width:126px;height:42px;background:linear-gradient(#ececec,#e4e4e4);border:1.5px solid #9c9c9c;border-radius:7px"></div>
<div class="a nw" style="left:1041px;top:227px;font-size:21.2px;line-height:26px;color:#222">No limit</div>
<svg class="a" style="left:1140px;top:230px" width="11" height="20" viewBox="0 0 11 20"><path d="M1 8 L5.5 1 L10 8Z M1 12 L5.5 19 L10 12Z" fill="#333"/></svg>
<svg class="a" style="left:481px;top:232px" width="23" height="16" viewBox="0 0 23 16"><path d="M1.2 14.5 V2.2 Q1.2 1 2.4 1 H7 L8.6 3 H13.2 Q14.4 3 14.4 4.2 V6.2" fill="none" stroke="#111" stroke-width="1.7" stroke-linejoin="round"/><path d="M1.5 14.8 L5.5 7.5 Q6 6.5 7.2 6.5 H21.2 Q22.2 6.5 21.6 7.5 L17.6 14 Q17 15 16 15 H1.5Z" fill="none" stroke="#111" stroke-width="1.7" stroke-linejoin="round"/></svg>
<svg class="a" style="left:538px;top:232px" width="18" height="18" viewBox="0 0 18 18"><path d="M1 1 H13.5 L17 4.5 V17 H1Z" fill="none" stroke="#111" stroke-width="1.8" stroke-linejoin="round"/><rect x="4" y="1" width="7" height="5" fill="#111"/><rect x="7.5" y="1.8" width="2" height="3.2" fill="#eee"/><path d="M4 17 V10.5 H14 V17" fill="none" stroke="#111" stroke-width="1.7"/></svg>
<div class="a" style="left:583.2px;top:239px;width:0;height:0;border-left:5.5px solid transparent;border-right:5.5px solid transparent;border-top:5.5px solid #222"></div>
<svg class="a" style="left:626px;top:231px" width="21" height="21" viewBox="0 0 21 21"><circle cx="8.5" cy="8.5" r="6.2" fill="none" stroke="#111" stroke-width="2.8"/><path d="M13 13 L18.5 18.5" stroke="#111" stroke-width="3.2" stroke-linecap="round"/></svg>
<div class="a" style="left:672.8px;top:239px;width:0;height:0;border-left:5.5px solid transparent;border-right:5.5px solid transparent;border-top:5.5px solid #222"></div>
<svg class="a" style="left:715px;top:229px" width="22" height="22" viewBox="0 0 22 22"><g fill="#e6e6e6" stroke="#6e6e6e" stroke-width="1.6" stroke-linejoin="round"><path d="M1.1 7 L6.5 1.6 H12.2 Q13.2 1.6 13.2 2.6 V15.7 Q13.2 16.7 12.2 16.7 H2.1 Q1.1 16.7 1.1 15.7 Z"/><path d="M1.1 7 H6.5 V1.6" fill="none"/><path d="M8.1 11.5 L13.4 6.2 H19.4 Q20.4 6.2 20.4 7.2 V19.8 Q20.4 20.8 19.4 20.8 H9.1 Q8.1 20.8 8.1 19.8Z"/><path d="M8.1 11.5 H13.4 V6.2" fill="none"/></g></svg>
<svg class="a" style="left:770px;top:229px" width="22" height="22" viewBox="0 0 22 22"><rect x="1.3" y="1.6" width="13.5" height="16.2" rx="1" fill="#707070"/><rect x="4" y="3.2" width="8" height="1.5" fill="#e6e6e6"/><g fill="#e6e6e6" stroke="#6e6e6e" stroke-width="1.6" stroke-linejoin="round"><path d="M8.7 7.5 Q8.7 6.5 9.7 6.5 H15.3 L20.6 11.8 V19.8 Q20.6 20.8 19.6 20.8 H9.7 Q8.7 20.8 8.7 19.8Z"/><path d="M15.3 6.5 V11.8 H20.6" fill="none"/></g></svg>
<svg class="a" style="left:836px;top:231px" width="15" height="19" viewBox="0 0 15 19"><path d="M0.5 3.5 H14.5" stroke="#8a8a8a" stroke-width="1.8"/><path d="M5 3 V1 H10 V3" fill="none" stroke="#8a8a8a" stroke-width="1.4"/><path d="M2 4.5 L2.8 17.5 Q2.9 18.5 4 18.5 H11 Q12.1 18.5 12.2 17.5 L13 4.5Z" fill="#8a8a8a"/><path d="M5 7 V16 M7.5 7 V16 M10 7 V16" stroke="#e6e6e6" stroke-width="1.1"/></svg>
<svg class="a" style="left:887px;top:230px" width="22" height="20" viewBox="0 0 22 20"><path d="M11 3 H3.5 Q1.5 3 1.5 5 V16 Q1.5 18 3.5 18 H14.5 Q16.5 18 16.5 16 V10" fill="none" stroke="#111" stroke-width="1.8"/><path d="M7.5 13.5 L8.5 10 L17.5 1 L20.5 4 L11.5 13Z" fill="#f4f4f4" stroke="#111" stroke-width="1.6" stroke-linejoin="round"/><path d="M16 2.5 L19 5.5" stroke="#111" stroke-width="1.4"/></svg>
<div class="a" style="left:910.5px;top:239px;width:0;height:0;border-left:5.5px solid transparent;border-right:5.5px solid transparent;border-top:5.5px solid #222"></div>
<svg class="a" style="left:958px;top:232px" width="19" height="18" viewBox="0 0 19 18"><path d="M0.5 0.5 H18.5 L11.5 8.5 V17.5 L7.5 14 V8.5Z" fill="#8e8e8e"/></svg>
<div class="a" style="left:1003.0px;top:239px;width:0;height:0;border-left:5.5px solid transparent;border-right:5.5px solid transparent;border-top:5.5px solid #8e8e8e"></div>
<svg class="a" style="left:1183.5px;top:230.5px" width="13" height="22" viewBox="0 0 13 22"><path d="M5 0.5 H11 L8 8 L12 8 L3.5 21.5 L5.5 11 L1.5 11Z" fill="#111"/></svg>
<div class="a" style="left:1224.5px;top:239px;width:0;height:0;border-left:5.5px solid transparent;border-right:5.5px solid transparent;border-top:5.5px solid #222"></div>
<svg class="a" style="left:1264px;top:231px" width="18" height="18" viewBox="0 0 18 18"><rect x="0.5" y="0.5" width="17" height="17" fill="#707070"/></svg>
<svg class="a" style="left:1317px;top:232px" width="22" height="15" viewBox="0 0 22 15"><path d="M6.5 1 H20.5 L13.5 14 H1.5 Q0.5 14 1 13Z" fill="#111"/><path d="M3.6 9.5 H9.6 L7.4 13 H1.7Z" fill="#f4f4f4"/></svg>
<div class="a" style="left:1343.5px;top:239px;width:0;height:0;border-left:5.5px solid transparent;border-right:5.5px solid transparent;border-top:5.5px solid #222"></div>
<svg class="a" style="left:1388px;top:230px" width="20" height="20" viewBox="0 0 20 20"><path d="M7 0.5 H13 V7.5 H17 L10 14 L3 7.5 H7Z" fill="#111"/><path d="M0.5 12.5 H6 L10 16 L14 12.5 H19.5 V19.5 H0.5Z" fill="#111"/><circle cx="15" cy="17" r="0.9" fill="#eee"/><circle cx="17.3" cy="17" r="0.9" fill="#eee"/></svg><!-- editor -->
<div class="a" style="left:458px;top:269px;width:1590px;height:229px;background:#fff"></div>
<div class="a" style="left:458px;top:269px;width:61px;height:229px;background:#f7f7f7;border-right:1px solid #e2e2e2"></div>
<div class="a" style="left:458px;top:304px;width:61px;height:1px;background:#e2e2e2"></div>
<div class="a" style="left:519px;top:269px;width:1529px;height:35px;background:#3179b5;border-bottom:1px solid #2b70ad;border-top:1px solid #2e73b0"></div>
<svg class="a" style="left:477px;top:275px" width="26" height="24" viewBox="0 0 26 24">
  <g transform="rotate(-45 13 12)" fill="none" stroke="#d0021b" stroke-width="2.1" stroke-linejoin="round" stroke-linecap="round">
  <path d="M-2 12 H3.5"/>
  <path d="M9.5 8 H6.5 A4 4 0 0 0 6.5 16 H9.5 Z"/>
  <path d="M16.5 8 H19.5 A4 4 0 0 1 19.5 16 H16.5 Z"/>
  <path d="M16.5 10 H13.5 M16.5 14 H13.5"/>
  <path d="M23 12 H28"/>
  </g>
</svg>
<div class="a nw" style="left:526px;top:275px;font-size:18.7px;line-height:26px;color:#fff;-webkit-text-stroke:0.45px #fff;letter-spacing:0.1px">postgres on postgres@PostgreSQL 9.5</div>
<div class="a nw" style="left:484px;top:315.5px;font-size:19.75px;line-height:26px;color:#999;font-family:'Liberation Mono',monospace">1</div>
<div class="a nw" style="left:526px;top:315.5px;font-size:19.9px;line-height:26px;color:#111;font-family:'Liberation Mono',monospace"><span style="color:#808">select</span> * <span style="color:#808">from</span> pg_class</div>
<!-- splitter -->
<div class="a" style="left:458px;top:498px;width:1590px;height:4px;background:#e2e2e2"></div>
<div class="a" style="left:458px;top:501.5px;width:1590px;height:1.5px;background:#a9a9a9"></div>
<!-- result tabs -->
<div class="a" style="left:588px;top:511px;width:86px;height:43px;border-left:1px solid #e3e3e3;border-top:1px solid #e5e5e5;border-radius:4px 4px 0 0"></div>
<div class="a" style="left:674px;top:511px;width:108px;height:43px;border-left:1px solid #e3e3e3;border-top:1px solid #e5e5e5;border-radius:4px 4px 0 0"></div>
<div class="a" style="left:782px;top:511px;width:144px;height:43px;border-left:1px solid #e3e3e3;border-top:1px solid #e5e5e5;border-radius:4px 4px 0 0"></div>
<div class="a" style="left:458px;top:510.5px;width:129px;height:44px;background:#fff;border-radius:6px 6px 0 0"></div>
<div class="a nw tab" style="left:470px;top:527px;color:#1a1a1a;font-size:19.3px">Data Output</div>
<div class="a nw tab" style="left:600.5px;top:525.5px;font-size:18.7px">Explain</div>
<div class="a nw tab" style="left:686.5px;top:526px;font-size:18.3px">Messages</div>
<div class="a nw tab" style="left:795px;top:525.5px;font-size:19.4px">Query History</div>
<div class="a" style="left:458px;top:553px;width:1590px;height:2.5px;background:#bdbdbd"></div>
<div class="a" style="left:458px;top:555.5px;width:1590px;height:724.5px;overflow:hidden;background:#fff">
<div class="a" style="left:0.0px;top:0.0px;width:1590.0px;height:54.5px;background:#e8e8e8"></div>
<div class="a" style="left:0.0px;top:54.5px;width:1590.0px;height:1.0px;background:#c6c6c6"></div>
<div class="a" style="left:78.0px;top:55.5px;width:1490.0px;height:34.6px;background:#fff"></div>
<div class="a" style="left:0.0px;top:55.5px;width:77.0px;height:34.6px;background:#e8e8e8"></div>
<div class="a" style="left:0.0px;top:90.1px;width:77.0px;height:1.0px;background:#c8c8c8"></div>
<div class="a" style="left:79.0px;top:90.1px;width:1489.0px;height:1.0px;background:#c6c6c6"></div>
<div class="a" style="left:78.0px;top:91.1px;width:1490.0px;height:34.6px;background:#f9f9f9"></div>
<div class="a" style="left:0.0px;top:91.1px;width:77.0px;height:34.6px;background:#e8e8e8"></div>
<div class="a" style="left:0.0px;top:125.7px;width:77.0px;height:1.0px;background:#c8c8c8"></div>
<div class="a" style="left:79.0px;top:125.7px;width:1489.0px;height:1.0px;background:#c6c6c6"></div>
<div class="a" style="left:78.0px;top:126.7px;width:1490.0px;height:34.6px;background:#fff"></div>
<div class="a" style="left:0.0px;top:126.7px;width:77.0px;height:34.6px;background:#e8e8e8"></div>
<div class="a" style="left:0.0px;top:161.3px;width:77.0px;height:1.0px;background:#c8c8c8"></div>
<div class="a" style="left:79.0px;top:161.3px;width:1489.0px;height:1.0px;background:#c6c6c6"></div>
<div class="a" style="left:78.0px;top:162.3px;width:1490.0px;height:34.6px;background:#f9f9f9"></div>
<div class="a" style="left:0.0px;top:162.3px;width:77.0px;height:34.6px;background:#e8e8e8"></div>
<div class="a" style="left:0.0px;top:196.9px;width:77.0px;height:1.0px;background:#c8c8c8"></div>
<div class="a" style="left:79.0px;top:196.9px;width:1489.0px;height:1.0px;background:#c6c6c6"></div>
<div class="a" style="left:78.0px;top:197.9px;width:1490.0px;height:34.6px;background:#fff"></div>
<div class="a" style="left:0.0px;top:197.9px;width:77.0px;height:34.6px;background:#e8e8e8"></div>
<div class="a" style="left:0.0px;top:232.5px;width:77.0px;height:1.0px;background:#c8c8c8"></div>
<div class="a" style="left:79.0px;top:232.5px;width:1489.0px;height:1.0px;background:#c6c6c6"></div>
<div class="a" style="left:78.0px;top:233.5px;width:1490.0px;height:34.6px;background:#f9f9f9"></div>
<div class="a" style="left:0.0px;top:233.5px;width:77.0px;height:34.6px;background:#e8e8e8"></div>
<div class="a" style="left:0.0px;top:268.1px;width:77.0px;height:1.0px;background:#c8c8c8"></div>
<div class="a" style="left:79.0px;top:268.1px;width:1489.0px;height:1.0px;background:#c6c6c6"></div>
<div class="a" style="left:78.0px;top:269.1px;width:1490.0px;height:34.6px;background:#fff"></div>
<div class="a" style="left:0.0px;top:269.1px;width:77.0px;height:34.6px;background:#e8e8e8"></div>
<div class="a" style="left:0.0px;top:303.7px;width:77.0px;height:1.0px;background:#c8c8c8"></div>
<div class="a" style="left:79.0px;top:303.7px;width:1489.0px;height:1.0px;background:#c6c6c6"></div>
<div class="a" style="left:78.0px;top:304.7px;width:1490.0px;height:34.6px;background:#f9f9f9"></div>
<div class="a" style="left:0.0px;top:304.7px;width:77.0px;height:34.6px;background:#e8e8e8"></div>
<div class="a" style="left:0.0px;top:339.3px;width:77.0px;height:1.0px;background:#c8c8c8"></div>
<div class="a" style="left:79.0px;top:339.3px;width:1489.0px;height:1.0px;background:#c6c6c6"></div>
<div class="a" style="left:78.0px;top:340.3px;width:1490.0px;height:34.6px;background:#fff"></div>
<div class="a" style="left:0.0px;top:340.3px;width:77.0px;height:34.6px;background:#e8e8e8"></div>
<div class="a" style="left:0.0px;top:374.9px;width:77.0px;height:1.0px;background:#c8c8c8"></div>
<div class="a" style="left:79.0px;top:374.9px;width:1489.0px;height:1.0px;background:#c6c6c6"></div>
<div class="a" style="left:78.0px;top:375.9px;width:1490.0px;height:34.6px;background:#f9f9f9"></div>
<div class="a" style="left:0.0px;top:375.9px;width:77.0px;height:34.6px;background:#e8e8e8"></div>
<div class="a" style="left:0.0px;top:410.5px;width:77.0px;height:1.0px;background:#c8c8c8"></div>
<div class="a" style="left:79.0px;top:410.5px;width:1489.0px;height:1.0px;background:#c6c6c6"></div>
<div class="a" style="left:78.0px;top:411.5px;width:1490.0px;height:34.6px;background:#fff"></div>
<div class="a" style="left:0.0px;top:411.5px;width:77.0px;height:34.6px;background:#e8e8e8"></div>
<div class="a" style="left:0.0px;top:446.1px;width:77.0px;height:1.0px;background:#c8c8c8"></div>
<div class="a" style="left:79.0px;top:446.1px;width:1489.0px;height:1.0px;background:#c6c6c6"></div>
<div class="a" style="left:78.0px;top:447.1px;width:1490.0px;height:34.6px;background:#f9f9f9"></div>
<div class="a" style="left:0.0px;top:447.1px;width:77.0px;height:34.6px;background:#e8e8e8"></div>
<div class="a" style="left:0.0px;top:481.7px;width:77.0px;height:1.0px;background:#c8c8c8"></div>
<div class="a" style="left:79.0px;top:481.7px;width:1489.0px;height:1.0px;background:#c6c6c6"></div>
<div class="a" style="left:78.0px;top:482.7px;width:1490.0px;height:34.6px;background:#fff"></div>
<div class="a" style="left:0.0px;top:482.7px;width:77.0px;height:34.6px;background:#e8e8e8"></div>
<div class="a" style="left:0.0px;top:517.3px;width:77.0px;height:1.0px;background:#c8c8c8"></div>
<div class="a" style="left:79.0px;top:517.3px;width:1489.0px;height:1.0px;background:#c6c6c6"></div>
<div class="a" style="left:78.0px;top:518.3px;width:1490.0px;height:34.6px;background:#f9f9f9"></div>
<div class="a" style="left:0.0px;top:518.3px;width:77.0px;height:34.6px;background:#e8e8e8"></div>
<div class="a" style="left:0.0px;top:552.9px;width:77.0px;height:1.0px;background:#c8c8c8"></div>
<div class="a" style="left:79.0px;top:552.9px;width:1489.0px;height:1.0px;background:#c6c6c6"></div>
<div class="a" style="left:78.0px;top:553.9px;width:1490.0px;height:34.6px;background:#fff"></div>
<div class="a" style="left:0.0px;top:553.9px;width:77.0px;height:34.6px;background:#e8e8e8"></div>
<div class="a" style="left:0.0px;top:588.5px;width:77.0px;height:1.0px;background:#c8c8c8"></div>
<div class="a" style="left:79.0px;top:588.5px;width:1489.0px;height:1.0px;background:#c6c6c6"></div>
<div class="a" style="left:78.0px;top:589.5px;width:1490.0px;height:34.6px;background:#f9f9f9"></div>
<div class="a" style="left:0.0px;top:589.5px;width:77.0px;height:34.6px;background:#e8e8e8"></div>
<div class="a" style="left:0.0px;top:624.1px;width:77.0px;height:1.0px;background:#c8c8c8"></div>
<div class="a" style="left:79.0px;top:624.1px;width:1489.0px;height:1.0px;background:#c6c6c6"></div>
<div class="a" style="left:78.0px;top:625.1px;width:1490.0px;height:34.6px;background:#fff"></div>
<div class="a" style="left:0.0px;top:625.1px;width:77.0px;height:34.6px;background:#e8e8e8"></div>
<div class="a" style="left:0.0px;top:659.7px;width:77.0px;height:1.0px;background:#c8c8c8"></div>
<div class="a" style="left:79.0px;top:659.7px;width:1489.0px;height:1.0px;background:#c6c6c6"></div>
<div class="a" style="left:78.0px;top:660.7px;width:1490.0px;height:34.6px;background:#f9f9f9"></div>
<div class="a" style="left:0.0px;top:660.7px;width:77.0px;height:34.6px;background:#e8e8e8"></div>
<div class="a" style="left:0.0px;top:695.3px;width:77.0px;height:1.0px;background:#c8c8c8"></div>
<div class="a" style="left:79.0px;top:695.3px;width:1489.0px;height:1.0px;background:#c6c6c6"></div>
<div class="a" style="left:78.0px;top:696.3px;width:1490.0px;height:34.6px;background:#fff"></div>
<div class="a" style="left:0.0px;top:696.3px;width:77.0px;height:34.6px;background:#e8e8e8"></div>
<div class="a" style="left:0.0px;top:730.9px;width:77.0px;height:1.0px;background:#c8c8c8"></div>
<div class="a" style="left:79.0px;top:730.9px;width:1489.0px;height:1.0px;background:#c6c6c6"></div>
<div class="a" style="left:77.0px;top:0.0px;width:1.0px;height:702.0px;background:#c8c8c8"></div>
<div class="a" style="left:186.5px;top:0.0px;width:1.0px;height:702.0px;background:#d0d0d0"></div>
<div class="a" style="left:350.0px;top:0.0px;width:1.0px;height:702.0px;background:#d0d0d0"></div>
<div class="a" style="left:448.0px;top:0.0px;width:1.0px;height:702.0px;background:#d0d0d0"></div>
<div class="a" style="left:564.5px;top:0.0px;width:1.0px;height:702.0px;background:#d0d0d0"></div>
<div class="a" style="left:681.5px;top:0.0px;width:1.0px;height:702.0px;background:#d0d0d0"></div>
<div class="a" style="left:767.5px;top:0.0px;width:1.0px;height:702.0px;background:#d0d0d0"></div>
<div class="a" style="left:900.5px;top:0.0px;width:1.0px;height:702.0px;background:#d0d0d0"></div>
<div class="a" style="left:1056.5px;top:0.0px;width:1.0px;height:702.0px;background:#d0d0d0"></div>
<div class="a" style="left:1168.5px;top:0.0px;width:1.0px;height:702.0px;background:#d0d0d0"></div>
<div class="a" style="left:1282.5px;top:0.0px;width:1.0px;height:702.0px;background:#d0d0d0"></div>
<div class="a" style="left:1419.5px;top:0.0px;width:1.0px;height:702.0px;background:#d0d0d0"></div>
<div class="a" style="left:1564.5px;top:0.0px;width:1.0px;height:702.0px;background:#d0d0d0"></div>
<div class="a nw" style="left:87.0px;top:5.5px;font-size:17.8px;line-height:22.5px;color:#222">relname</div>
<div class="a nw" style="left:87.0px;top:28.0px;font-size:17.8px;line-height:22.5px;color:#222">name</div>
<div class="a nw" style="left:196.0px;top:5.5px;font-size:17.8px;line-height:22.5px;color:#222">relnamespace</div>
<div class="a nw" style="left:196.0px;top:28.0px;font-size:17.8px;line-height:22.5px;color:#222">oid</div>
<div class="a nw" style="left:359.5px;top:5.5px;font-size:17.8px;line-height:22.5px;color:#222">reltype</div>
<div class="a nw" style="left:359.5px;top:28.0px;font-size:17.8px;line-height:22.5px;color:#222">oid</div>
<div class="a nw" style="left:457.5px;top:5.5px;font-size:17.8px;line-height:22.5px;color:#222">reloftype</div>
<div class="a nw" style="left:457.5px;top:28.0px;font-size:17.8px;line-height:22.5px;color:#222">oid</div>
<div class="a nw" style="left:574.0px;top:5.5px;font-size:17.8px;line-height:22.5px;color:#222">relowner</div>
<div class="a nw" style="left:574.0px;top:28.0px;font-size:17.8px;line-height:22.5px;color:#222">oid</div>
<div class="a nw" style="left:691.0px;top:5.5px;font-size:17.8px;line-height:22.5px;color:#222">relam</div>
<div class="a nw" style="left:691.0px;top:28.0px;font-size:17.8px;line-height:22.5px;color:#222">oid</div>
<div class="a nw" style="left:777.0px;top:5.5px;font-size:17.8px;line-height:22.5px;color:#222">relfilenode</div>
<div class="a nw" style="left:777.0px;top:28.0px;font-size:17.8px;line-height:22.5px;color:#222">oid</div>
<div class="a nw" style="left:910.0px;top:5.5px;font-size:17.8px;line-height:22.5px;color:#222">reltablespace</div>
<div class="a nw" style="left:910.0px;top:28.0px;font-size:17.8px;line-height:22.5px;color:#222">oid</div>
<div class="a nw" style="left:1066.0px;top:5.5px;font-size:17.8px;line-height:22.5px;color:#222">relpages</div>
<div class="a nw" style="left:1066.0px;top:28.0px;font-size:17.8px;line-height:22.5px;color:#222">integer</div>
<div class="a nw" style="left:1178.0px;top:5.5px;font-size:17.8px;line-height:22.5px;color:#222">reltuples</div>
<div class="a nw" style="left:1178.0px;top:28.0px;font-size:17.8px;line-height:22.5px;color:#222">real</div>
<div class="a nw" style="left:1292.0px;top:5.5px;font-size:17.8px;line-height:22.5px;color:#222">relallvisible</div>
<div class="a nw" style="left:1292.0px;top:28.0px;font-size:17.8px;line-height:22.5px;color:#222">integer</div>
<div class="a nw" style="left:1429.0px;top:5.5px;font-size:17.8px;line-height:22.5px;color:#222">reltoastrelid</div>
<div class="a nw" style="left:1429.0px;top:28.0px;font-size:17.8px;line-height:22.5px;color:#222">oid</div>
<div class="a nw" style="left:1574.0px;top:5.5px;font-size:17.8px;line-height:22.5px;color:#222">relhasindex</div>
<div class="a nw" style="left:1574.0px;top:28.0px;font-size:17.8px;line-height:22.5px;color:#222">boolean</div>
<svg class="a" style="left:57px;top:34.5px" width="14" height="14" viewBox="0 0 14 14"><path d="M13.5 0.5 V13.5 H0.5Z" fill="#777"/></svg>
<div class="a nw" style="left:0.0px;top:61.5px;width:77px;text-align:center;font-size:17.6px;line-height:22px;color:#222">1</div>
<div class="a nw" style="left:86.5px;top:61.5px;font-size:17.6px;line-height:22px;color:#1a1a1a">data_milli...</div>
<div class="a nw" style="left:195.5px;top:61.5px;font-size:17.6px;line-height:22px;color:#1a1a1a">2200</div>
<div class="a nw" style="left:359.0px;top:61.5px;font-size:17.6px;line-height:22px;color:#1a1a1a">16395</div>
<div class="a nw" style="left:457.0px;top:61.5px;font-size:17.6px;line-height:22px;color:#1a1a1a">0</div>
<div class="a nw" style="left:573.5px;top:61.5px;font-size:17.6px;line-height:22px;color:#1a1a1a">10</div>
<div class="a nw" style="left:690.5px;top:61.5px;font-size:17.6px;line-height:22px;color:#1a1a1a">0</div>
<div class="a nw" style="left:776.5px;top:61.5px;font-size:17.6px;line-height:22px;color:#1a1a1a">16394</div>
<div class="a nw" style="left:909.5px;top:61.5px;font-size:17.6px;line-height:22px;color:#1a1a1a">0</div>
<div class="a nw" style="left:1057.0px;top:61.5px;width:105.5px;text-align:right;font-size:17.6px;line-height:22px;color:#1a1a1a">1</div>
<div class="a nw" style="left:1169.0px;top:61.5px;width:107.5px;text-align:right;font-size:17.6px;line-height:22px;color:#1a1a1a">1</div>
<div class="a nw" style="left:1283.0px;top:61.5px;width:130.5px;text-align:right;font-size:17.6px;line-height:22px;color:#1a1a1a">0</div>
<div class="a nw" style="left:1428.5px;top:61.5px;font-size:17.6px;line-height:22px;color:#1a1a1a">0</div>
<div class="a nw" style="left:0.0px;top:97.1px;width:77px;text-align:center;font-size:17.6px;line-height:22px;color:#222">2</div>
<div class="a nw" style="left:86.5px;top:97.1px;font-size:17.6px;line-height:22px;color:#1a1a1a">nn_nn242...</div>
<div class="a nw" style="left:195.5px;top:97.1px;font-size:17.6px;line-height:22px;color:#1a1a1a">2200</div>
<div class="a nw" style="left:359.0px;top:97.1px;font-size:17.6px;line-height:22px;color:#1a1a1a">223739</div>
<div class="a nw" style="left:457.0px;top:97.1px;font-size:17.6px;line-height:22px;color:#1a1a1a">0</div>
<div class="a nw" style="left:573.5px;top:97.1px;font-size:17.6px;line-height:22px;color:#1a1a1a">10</div>
<div class="a nw" style="left:690.5px;top:97.1px;font-size:17.6px;line-height:22px;color:#1a1a1a">0</div>
<div class="a nw" style="left:776.5px;top:97.1px;font-size:17.6px;line-height:22px;color:#1a1a1a">223737</div>
<div class="a nw" style="left:909.5px;top:97.1px;font-size:17.6px;line-height:22px;color:#1a1a1a">0</div>
<div class="a nw" style="left:1057.0px;top:97.1px;width:105.5px;text-align:right;font-size:17.6px;line-height:22px;color:#1a1a1a">0</div>
<div class="a nw" style="left:1169.0px;top:97.1px;width:107.5px;text-align:right;font-size:17.6px;line-height:22px;color:#1a1a1a">0</div>
<div class="a nw" style="left:1283.0px;top:97.1px;width:130.5px;text-align:right;font-size:17.6px;line-height:22px;color:#1a1a1a">0</div>
<div class="a nw" style="left:1428.5px;top:97.1px;font-size:17.6px;line-height:22px;color:#1a1a1a">0</div>
<div class="a nw" style="left:0.0px;top:132.7px;width:77px;text-align:center;font-size:17.6px;line-height:22px;color:#222">3</div>
<div class="a nw" style="left:86.5px;top:132.7px;font-size:17.6px;line-height:22px;color:#1a1a1a">hh_hh676...</div>
<div class="a nw" style="left:195.5px;top:132.7px;font-size:17.6px;line-height:22px;color:#1a1a1a">2200</div>
<div class="a nw" style="left:359.0px;top:132.7px;font-size:17.6px;line-height:22px;color:#1a1a1a">223732</div>
<div class="a nw" style="left:457.0px;top:132.7px;font-size:17.6px;line-height:22px;color:#1a1a1a">0</div>
<div class="a nw" style="left:573.5px;top:132.7px;font-size:17.6px;line-height:22px;color:#1a1a1a">10</div>
<div class="a nw" style="left:690.5px;top:132.7px;font-size:17.6px;line-height:22px;color:#1a1a1a">0</div>
<div class="a nw" style="left:776.5px;top:132.7px;font-size:17.6px;line-height:22px;color:#1a1a1a">223730</div>
<div class="a nw" style="left:909.5px;top:132.7px;font-size:17.6px;line-height:22px;color:#1a1a1a">0</div>
<div class="a nw" style="left:1057.0px;top:132.7px;width:105.5px;text-align:right;font-size:17.6px;line-height:22px;color:#1a1a1a">0</div>
<div class="a nw" style="left:1169.0px;top:132.7px;width:107.5px;text-align:right;font-size:17.6px;line-height:22px;color:#1a1a1a">0</div>
<div class="a nw" style="left:1283.0px;top:132.7px;width:130.5px;text-align:right;font-size:17.6px;line-height:22px;color:#1a1a1a">0</div>
<div class="a nw" style="left:1428.5px;top:132.7px;font-size:17.6px;line-height:22px;color:#1a1a1a">0</div>
<div class="a nw" style="left:0.0px;top:168.3px;width:77px;text-align:center;font-size:17.6px;line-height:22px;color:#222">4</div>
<div class="a nw" style="left:86.5px;top:168.3px;font-size:17.6px;line-height:22px;color:#1a1a1a">oo_oo494...</div>
<div class="a nw" style="left:195.5px;top:168.3px;font-size:17.6px;line-height:22px;color:#1a1a1a">2200</div>
<div class="a nw" style="left:359.0px;top:168.3px;font-size:17.6px;line-height:22px;color:#1a1a1a">223746</div>
<div class="a nw" style="left:457.0px;top:168.3px;font-size:17.6px;line-height:22px;color:#1a1a1a">0</div>
<div class="a nw" style="left:573.5px;top:168.3px;font-size:17.6px;line-height:22px;color:#1a1a1a">10</div>
<div class="a nw" style="left:690.5px;top:168.3px;font-size:17.6px;line-height:22px;color:#1a1a1a">0</div>
<div class="a nw" style="left:776.5px;top:168.3px;font-size:17.6px;line-height:22px;color:#1a1a1a">223744</div>
<div class="a nw" style="left:909.5px;top:168.3px;font-size:17.6px;line-height:22px;color:#1a1a1a">0</div>
<div class="a nw" style="left:1057.0px;top:168.3px;width:105.5px;text-align:right;font-size:17.6px;line-height:22px;color:#1a1a1a">0</div>
<div class="a nw" style="left:1169.0px;top:168.3px;width:107.5px;text-align:right;font-size:17.6px;line-height:22px;color:#1a1a1a">0</div>
<div class="a nw" style="left:1283.0px;top:168.3px;width:130.5px;text-align:right;font-size:17.6px;line-height:22px;color:#1a1a1a">0</div>
<div class="a nw" style="left:1428.5px;top:168.3px;font-size:17.6px;line-height:22px;color:#1a1a1a">0</div>
<div class="a nw" style="left:0.0px;top:203.9px;width:77px;text-align:center;font-size:17.6px;line-height:22px;color:#222">5</div>
<div class="a nw" style="left:86.5px;top:203.9px;font-size:17.6px;line-height:22px;color:#1a1a1a">cc_cc5501...</div>
<div class="a nw" style="left:195.5px;top:203.9px;font-size:17.6px;line-height:22px;color:#1a1a1a">2200</div>
<div class="a nw" style="left:359.0px;top:203.9px;font-size:17.6px;line-height:22px;color:#1a1a1a">223753</div>
<div class="a nw" style="left:457.0px;top:203.9px;font-size:17.6px;line-height:22px;color:#1a1a1a">0</div>
<div class="a nw" style="left:573.5px;top:203.9px;font-size:17.6px;line-height:22px;color:#1a1a1a">10</div>
<div class="a nw" style="left:690.5px;top:203.9px;font-size:17.6px;line-height:22px;color:#1a1a1a">0</div>
<div class="a nw" style="left:776.5px;top:203.9px;font-size:17.6px;line-height:22px;color:#1a1a1a">223751</div>
<div class="a nw" style="left:909.5px;top:203.9px;font-size:17.6px;line-height:22px;color:#1a1a1a">0</div>
<div class="a nw" style="left:1057.0px;top:203.9px;width:105.5px;text-align:right;font-size:17.6px;line-height:22px;color:#1a1a1a">0</div>
<div class="a nw" style="left:1169.0px;top:203.9px;width:107.5px;text-align:right;font-size:17.6px;line-height:22px;color:#1a1a1a">0</div>
<div class="a nw" style="left:1283.0px;top:203.9px;width:130.5px;text-align:right;font-size:17.6px;line-height:22px;color:#1a1a1a">0</div>
<div class="a nw" style="left:1428.5px;top:203.9px;font-size:17.6px;line-height:22px;color:#1a1a1a">0</div>
<div class="a nw" style="left:0.0px;top:239.5px;width:77px;text-align:center;font-size:17.6px;line-height:22px;color:#222">6</div>
<div class="a nw" style="left:86.5px;top:239.5px;font-size:17.6px;line-height:22px;color:#1a1a1a">oo_oo506...</div>
<div class="a nw" style="left:195.5px;top:239.5px;font-size:17.6px;line-height:22px;color:#1a1a1a">2200</div>
<div class="a nw" style="left:359.0px;top:239.5px;font-size:17.6px;line-height:22px;color:#1a1a1a">223760</div>
<div class="a nw" style="left:457.0px;top:239.5px;font-size:17.6px;line-height:22px;color:#1a1a1a">0</div>
<div class="a nw" style="left:573.5px;top:239.5px;font-size:17.6px;line-height:22px;color:#1a1a1a">10</div>
<div class="a nw" style="left:690.5px;top:239.5px;font-size:17.6px;line-height:22px;color:#1a1a1a">0</div>
<div class="a nw" style="left:776.5px;top:239.5px;font-size:17.6px;line-height:22px;color:#1a1a1a">223758</div>
<div class="a nw" style="left:909.5px;top:239.5px;font-size:17.6px;line-height:22px;color:#1a1a1a">0</div>
<div class="a nw" style="left:1057.0px;top:239.5px;width:105.5px;text-align:right;font-size:17.6px;line-height:22px;color:#1a1a1a">0</div>
<div class="a nw" style="left:1169.0px;top:239.5px;width:107.5px;text-align:right;font-size:17.6px;line-height:22px;color:#1a1a1a">0</div>
<div class="a nw" style="left:1283.0px;top:239.5px;width:130.5px;text-align:right;font-size:17.6px;line-height:22px;color:#1a1a1a">0</div>
<div class="a nw" style="left:1428.5px;top:239.5px;font-size:17.6px;line-height:22px;color:#1a1a1a">0</div>
<div class="a nw" style="left:0.0px;top:275.1px;width:77px;text-align:center;font-size:17.6px;line-height:22px;color:#222">7</div>
<div class="a nw" style="left:86.5px;top:275.1px;font-size:17.6px;line-height:22px;color:#1a1a1a">comp</div>
<div class="a nw" style="left:195.5px;top:275.1px;font-size:17.6px;line-height:22px;color:#1a1a1a">2200</div>
<div class="a nw" style="left:359.0px;top:275.1px;font-size:17.6px;line-height:22px;color:#1a1a1a">24600</div>
<div class="a nw" style="left:457.0px;top:275.1px;font-size:17.6px;line-height:22px;color:#1a1a1a">0</div>
<div class="a nw" style="left:573.5px;top:275.1px;font-size:17.6px;line-height:22px;color:#1a1a1a">10</div>
<div class="a nw" style="left:690.5px;top:275.1px;font-size:17.6px;line-height:22px;color:#1a1a1a">0</div>
<div class="a nw" style="left:776.5px;top:275.1px;font-size:17.6px;line-height:22px;color:#1a1a1a">24598</div>
<div class="a nw" style="left:909.5px;top:275.1px;font-size:17.6px;line-height:22px;color:#1a1a1a">0</div>
<div class="a nw" style="left:1057.0px;top:275.1px;width:105.5px;text-align:right;font-size:17.6px;line-height:22px;color:#1a1a1a">0</div>
<div class="a nw" style="left:1169.0px;top:275.1px;width:107.5px;text-align:right;font-size:17.6px;line-height:22px;color:#1a1a1a">0</div>
<div class="a nw" style="left:1283.0px;top:275.1px;width:130.5px;text-align:right;font-size:17.6px;line-height:22px;color:#1a1a1a">0</div>
<div class="a nw" style="left:1428.5px;top:275.1px;font-size:17.6px;line-height:22px;color:#1a1a1a">0</div>
<div class="a nw" style="left:0.0px;top:310.7px;width:77px;text-align:center;font-size:17.6px;line-height:22px;color:#222">8</div>
<div class="a nw" style="left:86.5px;top:310.7px;font-size:17.6px;line-height:22px;color:#1a1a1a">mv1</div>
<div class="a nw" style="left:195.5px;top:310.7px;font-size:17.6px;line-height:22px;color:#1a1a1a">2200</div>
<div class="a nw" style="left:359.0px;top:310.7px;font-size:17.6px;line-height:22px;color:#1a1a1a">32798</div>
<div class="a nw" style="left:457.0px;top:310.7px;font-size:17.6px;line-height:22px;color:#1a1a1a">0</div>
<div class="a nw" style="left:573.5px;top:310.7px;font-size:17.6px;line-height:22px;color:#1a1a1a">10</div>
<div class="a nw" style="left:690.5px;top:310.7px;font-size:17.6px;line-height:22px;color:#1a1a1a">0</div>
<div class="a nw" style="left:776.5px;top:310.7px;font-size:17.6px;line-height:22px;color:#1a1a1a">32796</div>
<div class="a nw" style="left:909.5px;top:310.7px;font-size:17.6px;line-height:22px;color:#1a1a1a">0</div>
<div class="a nw" style="left:1057.0px;top:310.7px;width:105.5px;text-align:right;font-size:17.6px;line-height:22px;color:#1a1a1a">0</div>
<div class="a nw" style="left:1169.0px;top:310.7px;width:107.5px;text-align:right;font-size:17.6px;line-height:22px;color:#1a1a1a">0</div>
<div class="a nw" style="left:1283.0px;top:310.7px;width:130.5px;text-align:right;font-size:17.6px;line-height:22px;color:#1a1a1a">0</div>
<div class="a nw" style="left:1428.5px;top:310.7px;font-size:17.6px;line-height:22px;color:#1a1a1a">0</div>
<div class="a nw" style="left:0.0px;top:346.3px;width:77px;text-align:center;font-size:17.6px;line-height:22px;color:#222">9</div>
<div class="a nw" style="left:86.5px;top:346.3px;font-size:17.6px;line-height:22px;color:#1a1a1a">hh_hh879...</div>
<div class="a nw" style="left:195.5px;top:346.3px;font-size:17.6px;line-height:22px;color:#1a1a1a">2200</div>
<div class="a nw" style="left:359.0px;top:346.3px;font-size:17.6px;line-height:22px;color:#1a1a1a">223767</div>
<div class="a nw" style="left:457.0px;top:346.3px;font-size:17.6px;line-height:22px;color:#1a1a1a">0</div>
<div class="a nw" style="left:573.5px;top:346.3px;font-size:17.6px;line-height:22px;color:#1a1a1a">10</div>
<div class="a nw" style="left:690.5px;top:346.3px;font-size:17.6px;line-height:22px;color:#1a1a1a">0</div>
<div class="a nw" style="left:776.5px;top:346.3px;font-size:17.6px;line-height:22px;color:#1a1a1a">223765</div>
<div class="a nw" style="left:909.5px;top:346.3px;font-size:17.6px;line-height:22px;color:#1a1a1a">0</div>
<div class="a nw" style="left:1057.0px;top:346.3px;width:105.5px;text-align:right;font-size:17.6px;line-height:22px;color:#1a1a1a">0</div>
<div class="a nw" style="left:1169.0px;top:346.3px;width:107.5px;text-align:right;font-size:17.6px;line-height:22px;color:#1a1a1a">0</div>
<div class="a nw" style="left:1283.0px;top:346.3px;width:130.5px;text-align:right;font-size:17.6px;line-height:22px;color:#1a1a1a">0</div>
<div class="a nw" style="left:1428.5px;top:346.3px;font-size:17.6px;line-height:22px;color:#1a1a1a">0</div>
<div class="a nw" style="left:0.0px;top:381.9px;width:77px;text-align:center;font-size:17.6px;line-height:22px;color:#222">10</div>
<div class="a nw" style="left:86.5px;top:381.9px;font-size:17.6px;line-height:22px;color:#1a1a1a">breakpoint</div>
<div class="a nw" style="left:195.5px;top:381.9px;font-size:17.6px;line-height:22px;color:#1a1a1a">2200</div>
<div class="a nw" style="left:359.0px;top:381.9px;font-size:17.6px;line-height:22px;color:#1a1a1a">232354</div>
<div class="a nw" style="left:457.0px;top:381.9px;font-size:17.6px;line-height:22px;color:#1a1a1a">0</div>
<div class="a nw" style="left:573.5px;top:381.9px;font-size:17.6px;line-height:22px;color:#1a1a1a">10</div>
<div class="a nw" style="left:690.5px;top:381.9px;font-size:17.6px;line-height:22px;color:#1a1a1a">0</div>
<div class="a nw" style="left:776.5px;top:381.9px;font-size:17.6px;line-height:22px;color:#1a1a1a">232352</div>
<div class="a nw" style="left:909.5px;top:381.9px;font-size:17.6px;line-height:22px;color:#1a1a1a">0</div>
<div class="a nw" style="left:1057.0px;top:381.9px;width:105.5px;text-align:right;font-size:17.6px;line-height:22px;color:#1a1a1a">0</div>
<div class="a nw" style="left:1169.0px;top:381.9px;width:107.5px;text-align:right;font-size:17.6px;line-height:22px;color:#1a1a1a">0</div>
<div class="a nw" style="left:1283.0px;top:381.9px;width:130.5px;text-align:right;font-size:17.6px;line-height:22px;color:#1a1a1a">0</div>
<div class="a nw" style="left:1428.5px;top:381.9px;font-size:17.6px;line-height:22px;color:#1a1a1a">0</div>
<div class="a nw" style="left:0.0px;top:417.5px;width:77px;text-align:center;font-size:17.6px;line-height:22px;color:#222">11</div>
<div class="a nw" style="left:86.5px;top:417.5px;font-size:17.6px;line-height:22px;color:#1a1a1a">pg_roles</div>
<div class="a nw" style="left:195.5px;top:417.5px;font-size:17.6px;line-height:22px;color:#1a1a1a">11</div>
<div class="a nw" style="left:359.0px;top:417.5px;font-size:17.6px;line-height:22px;color:#1a1a1a">11632</div>
<div class="a nw" style="left:457.0px;top:417.5px;font-size:17.6px;line-height:22px;color:#1a1a1a">0</div>
<div class="a nw" style="left:573.5px;top:417.5px;font-size:17.6px;line-height:22px;color:#1a1a1a">10</div>
<div class="a nw" style="left:690.5px;top:417.5px;font-size:17.6px;line-height:22px;color:#1a1a1a">0</div>
<div class="a nw" style="left:776.5px;top:417.5px;font-size:17.6px;line-height:22px;color:#1a1a1a">11631</div>
<div class="a nw" style="left:909.5px;top:417.5px;font-size:17.6px;line-height:22px;color:#1a1a1a">0</div>
<div class="a nw" style="left:1057.0px;top:417.5px;width:105.5px;text-align:right;font-size:17.6px;line-height:22px;color:#1a1a1a">0</div>
<div class="a nw" style="left:1169.0px;top:417.5px;width:107.5px;text-align:right;font-size:17.6px;line-height:22px;color:#1a1a1a">0</div>
<div class="a nw" style="left:1283.0px;top:417.5px;width:130.5px;text-align:right;font-size:17.6px;line-height:22px;color:#1a1a1a">0</div>
<div class="a nw" style="left:1428.5px;top:417.5px;font-size:17.6px;line-height:22px;color:#1a1a1a">0</div>
<div class="a nw" style="left:0.0px;top:453.1px;width:77px;text-align:center;font-size:17.6px;line-height:22px;color:#222">12</div>
<div class="a nw" style="left:86.5px;top:453.1px;font-size:17.6px;line-height:22px;color:#1a1a1a">pg_shadow</div>
<div class="a nw" style="left:195.5px;top:453.1px;font-size:17.6px;line-height:22px;color:#1a1a1a">11</div>
<div class="a nw" style="left:359.0px;top:453.1px;font-size:17.6px;line-height:22px;color:#1a1a1a">11636</div>
<div class="a nw" style="left:457.0px;top:453.1px;font-size:17.6px;line-height:22px;color:#1a1a1a">0</div>
<div class="a nw" style="left:573.5px;top:453.1px;font-size:17.6px;line-height:22px;color:#1a1a1a">10</div>
<div class="a nw" style="left:690.5px;top:453.1px;font-size:17.6px;line-height:22px;color:#1a1a1a">0</div>
<div class="a nw" style="left:776.5px;top:453.1px;font-size:17.6px;line-height:22px;color:#1a1a1a">11635</div>
<div class="a nw" style="left:909.5px;top:453.1px;font-size:17.6px;line-height:22px;color:#1a1a1a">0</div>
<div class="a nw" style="left:1057.0px;top:453.1px;width:105.5px;text-align:right;font-size:17.6px;line-height:22px;color:#1a1a1a">0</div>
<div class="a nw" style="left:1169.0px;top:453.1px;width:107.5px;text-align:right;font-size:17.6px;line-height:22px;color:#1a1a1a">0</div>
<div class="a nw" style="left:1283.0px;top:453.1px;width:130.5px;text-align:right;font-size:17.6px;line-height:22px;color:#1a1a1a">0</div>
<div class="a nw" style="left:1428.5px;top:453.1px;font-size:17.6px;line-height:22px;color:#1a1a1a">0</div>
<div class="a nw" style="left:0.0px;top:488.7px;width:77px;text-align:center;font-size:17.6px;line-height:22px;color:#222">13</div>
<div class="a nw" style="left:86.5px;top:488.7px;font-size:17.6px;line-height:22px;color:#1a1a1a">t1_id_seq</div>
<div class="a nw" style="left:195.5px;top:488.7px;font-size:17.6px;line-height:22px;color:#1a1a1a">2200</div>
<div class="a nw" style="left:359.0px;top:488.7px;font-size:17.6px;line-height:22px;color:#1a1a1a">81311</div>
<div class="a nw" style="left:457.0px;top:488.7px;font-size:17.6px;line-height:22px;color:#1a1a1a">0</div>
<div class="a nw" style="left:573.5px;top:488.7px;font-size:17.6px;line-height:22px;color:#1a1a1a">10</div>
<div class="a nw" style="left:690.5px;top:488.7px;font-size:17.6px;line-height:22px;color:#1a1a1a">0</div>
<div class="a nw" style="left:776.5px;top:488.7px;font-size:17.6px;line-height:22px;color:#1a1a1a">81310</div>
<div class="a nw" style="left:909.5px;top:488.7px;font-size:17.6px;line-height:22px;color:#1a1a1a">0</div>
<div class="a nw" style="left:1057.0px;top:488.7px;width:105.5px;text-align:right;font-size:17.6px;line-height:22px;color:#1a1a1a">1</div>
<div class="a nw" style="left:1169.0px;top:488.7px;width:107.5px;text-align:right;font-size:17.6px;line-height:22px;color:#1a1a1a">1</div>
<div class="a nw" style="left:1283.0px;top:488.7px;width:130.5px;text-align:right;font-size:17.6px;line-height:22px;color:#1a1a1a">0</div>
<div class="a nw" style="left:1428.5px;top:488.7px;font-size:17.6px;line-height:22px;color:#1a1a1a">0</div>
<div class="a nw" style="left:0.0px;top:524.3px;width:77px;text-align:center;font-size:17.6px;line-height:22px;color:#222">14</div>
<div class="a nw" style="left:86.5px;top:524.3px;font-size:17.6px;line-height:22px;color:#1a1a1a">pg_group</div>
<div class="a nw" style="left:195.5px;top:524.3px;font-size:17.6px;line-height:22px;color:#1a1a1a">11</div>
<div class="a nw" style="left:359.0px;top:524.3px;font-size:17.6px;line-height:22px;color:#1a1a1a">11640</div>
<div class="a nw" style="left:457.0px;top:524.3px;font-size:17.6px;line-height:22px;color:#1a1a1a">0</div>
<div class="a nw" style="left:573.5px;top:524.3px;font-size:17.6px;line-height:22px;color:#1a1a1a">10</div>
<div class="a nw" style="left:690.5px;top:524.3px;font-size:17.6px;line-height:22px;color:#1a1a1a">0</div>
<div class="a nw" style="left:776.5px;top:524.3px;font-size:17.6px;line-height:22px;color:#1a1a1a">11639</div>
<div class="a nw" style="left:909.5px;top:524.3px;font-size:17.6px;line-height:22px;color:#1a1a1a">0</div>
<div class="a nw" style="left:1057.0px;top:524.3px;width:105.5px;text-align:right;font-size:17.6px;line-height:22px;color:#1a1a1a">0</div>
<div class="a nw" style="left:1169.0px;top:524.3px;width:107.5px;text-align:right;font-size:17.6px;line-height:22px;color:#1a1a1a">0</div>
<div class="a nw" style="left:1283.0px;top:524.3px;width:130.5px;text-align:right;font-size:17.6px;line-height:22px;color:#1a1a1a">0</div>
<div class="a nw" style="left:1428.5px;top:524.3px;font-size:17.6px;line-height:22px;color:#1a1a1a">0</div>
<div class="a nw" style="left:0.0px;top:559.9px;width:77px;text-align:center;font-size:17.6px;line-height:22px;color:#222">15</div>
<div class="a nw" style="left:86.5px;top:559.9px;font-size:17.6px;line-height:22px;color:#1a1a1a">pg_user</div>
<div class="a nw" style="left:195.5px;top:559.9px;font-size:17.6px;line-height:22px;color:#1a1a1a">11</div>
<div class="a nw" style="left:359.0px;top:559.9px;font-size:17.6px;line-height:22px;color:#1a1a1a">11643</div>
<div class="a nw" style="left:457.0px;top:559.9px;font-size:17.6px;line-height:22px;color:#1a1a1a">0</div>
<div class="a nw" style="left:573.5px;top:559.9px;font-size:17.6px;line-height:22px;color:#1a1a1a">10</div>
<div class="a nw" style="left:690.5px;top:559.9px;font-size:17.6px;line-height:22px;color:#1a1a1a">0</div>
<div class="a nw" style="left:776.5px;top:559.9px;font-size:17.6px;line-height:22px;color:#1a1a1a">11642</div>
<div class="a nw" style="left:909.5px;top:559.9px;font-size:17.6px;line-height:22px;color:#1a1a1a">0</div>
<div class="a nw" style="left:1057.0px;top:559.9px;width:105.5px;text-align:right;font-size:17.6px;line-height:22px;color:#1a1a1a">0</div>
<div class="a nw" style="left:1169.0px;top:559.9px;width:107.5px;text-align:right;font-size:17.6px;line-height:22px;color:#1a1a1a">0</div>
<div class="a nw" style="left:1283.0px;top:559.9px;width:130.5px;text-align:right;font-size:17.6px;line-height:22px;color:#1a1a1a">0</div>
<div class="a nw" style="left:1428.5px;top:559.9px;font-size:17.6px;line-height:22px;color:#1a1a1a">0</div>
<div class="a nw" style="left:0.0px;top:595.5px;width:77px;text-align:center;font-size:17.6px;line-height:22px;color:#222">16</div>
<div class="a nw" style="left:86.5px;top:595.5px;font-size:17.6px;line-height:22px;color:#1a1a1a">nn_nn254...</div>
<div class="a nw" style="left:195.5px;top:595.5px;font-size:17.6px;line-height:22px;color:#1a1a1a">2200</div>
<div class="a nw" style="left:359.0px;top:595.5px;font-size:17.6px;line-height:22px;color:#1a1a1a">223774</div>
<div class="a nw" style="left:457.0px;top:595.5px;font-size:17.6px;line-height:22px;color:#1a1a1a">0</div>
<div class="a nw" style="left:573.5px;top:595.5px;font-size:17.6px;line-height:22px;color:#1a1a1a">10</div>
<div class="a nw" style="left:690.5px;top:595.5px;font-size:17.6px;line-height:22px;color:#1a1a1a">0</div>
<div class="a nw" style="left:776.5px;top:595.5px;font-size:17.6px;line-height:22px;color:#1a1a1a">223772</div>
<div class="a nw" style="left:909.5px;top:595.5px;font-size:17.6px;line-height:22px;color:#1a1a1a">0</div>
<div class="a nw" style="left:1057.0px;top:595.5px;width:105.5px;text-align:right;font-size:17.6px;line-height:22px;color:#1a1a1a">0</div>
<div class="a nw" style="left:1169.0px;top:595.5px;width:107.5px;text-align:right;font-size:17.6px;line-height:22px;color:#1a1a1a">0</div>
<div class="a nw" style="left:1283.0px;top:595.5px;width:130.5px;text-align:right;font-size:17.6px;line-height:22px;color:#1a1a1a">0</div>
<div class="a nw" style="left:1428.5px;top:595.5px;font-size:17.6px;line-height:22px;color:#1a1a1a">0</div>
<div class="a nw" style="left:0.0px;top:631.1px;width:77px;text-align:center;font-size:17.6px;line-height:22px;color:#222">17</div>
<div class="a nw" style="left:86.5px;top:631.1px;font-size:17.6px;line-height:22px;color:#1a1a1a">xx_xx315...</div>
<div class="a nw" style="left:195.5px;top:631.1px;font-size:17.6px;line-height:22px;color:#1a1a1a">2200</div>
<div class="a nw" style="left:359.0px;top:631.1px;font-size:17.6px;line-height:22px;color:#1a1a1a">223781</div>
<div class="a nw" style="left:457.0px;top:631.1px;font-size:17.6px;line-height:22px;color:#1a1a1a">0</div>
<div class="a nw" style="left:573.5px;top:631.1px;font-size:17.6px;line-height:22px;color:#1a1a1a">10</div>
<div class="a nw" style="left:690.5px;top:631.1px;font-size:17.6px;line-height:22px;color:#1a1a1a">0</div>
<div class="a nw" style="left:776.5px;top:631.1px;font-size:17.6px;line-height:22px;color:#1a1a1a">223779</div>
<div class="a nw" style="left:909.5px;top:631.1px;font-size:17.6px;line-height:22px;color:#1a1a1a">0</div>
<div class="a nw" style="left:1057.0px;top:631.1px;width:105.5px;text-align:right;font-size:17.6px;line-height:22px;color:#1a1a1a">0</div>
<div class="a nw" style="left:1169.0px;top:631.1px;width:107.5px;text-align:right;font-size:17.6px;line-height:22px;color:#1a1a1a">0</div>
<div class="a nw" style="left:1283.0px;top:631.1px;width:130.5px;text-align:right;font-size:17.6px;line-height:22px;color:#1a1a1a">0</div>
<div class="a nw" style="left:1428.5px;top:631.1px;font-size:17.6px;line-height:22px;color:#1a1a1a">0</div>
<div class="a nw" style="left:0.0px;top:666.7px;width:77px;text-align:center;font-size:17.6px;line-height:22px;color:#222">18</div>
<div class="a nw" style="left:86.5px;top:666.7px;font-size:17.6px;line-height:22px;color:#1a1a1a">11_c1_seq</div>
<div class="a nw" style="left:195.5px;top:666.7px;font-size:17.6px;line-height:22px;color:#1a1a1a">2200</div>
<div class="a nw" style="left:359.0px;top:666.7px;font-size:17.6px;line-height:22px;color:#1a1a1a">100812</div>
<div class="a nw" style="left:457.0px;top:666.7px;font-size:17.6px;line-height:22px;color:#1a1a1a">0</div>
<div class="a nw" style="left:573.5px;top:666.7px;font-size:17.6px;line-height:22px;color:#1a1a1a">10</div>
<div class="a nw" style="left:690.5px;top:666.7px;font-size:17.6px;line-height:22px;color:#1a1a1a">0</div>
<div class="a nw" style="left:776.5px;top:666.7px;font-size:17.6px;line-height:22px;color:#1a1a1a">100811</div>
<div class="a nw" style="left:909.5px;top:666.7px;font-size:17.6px;line-height:22px;color:#1a1a1a">0</div>
<div class="a nw" style="left:1057.0px;top:666.7px;width:105.5px;text-align:right;font-size:17.6px;line-height:22px;color:#1a1a1a">1</div>
<div class="a nw" style="left:1169.0px;top:666.7px;width:107.5px;text-align:right;font-size:17.6px;line-height:22px;color:#1a1a1a">1</div>
<div class="a nw" style="left:1283.0px;top:666.7px;width:130.5px;text-align:right;font-size:17.6px;line-height:22px;color:#1a1a1a">0</div>
<div class="a nw" style="left:1428.5px;top:666.7px;font-size:17.6px;line-height:22px;color:#1a1a1a">0</div>
</div>
<div class="a" style="left:2026px;top:611px;width:22px;height:646.5px;background:#f6f6f6;border-left:1px solid #e6e6e6"></div>
<div class="a" style="left:2032px;top:617px;width:11.5px;height:24px;background:#c2c2c2;border-radius:6px"></div>
<div class="a" style="left:458px;top:1257.5px;width:1590px;height:22.5px;background:#fff"></div>
<div class="a" style="left:458px;top:1257.5px;width:1568px;height:22.5px;background:#f9f9f9;border-top:1px solid #ececec"></div>
<div class="a" style="left:462px;top:1263px;width:566px;height:11px;background:#c1c1c1;border-radius:6px"></div>
<div class="a" style="left:458px;top:1277px;width:1568px;height:2px;background:#ebebeb"></div>
</body></html>
